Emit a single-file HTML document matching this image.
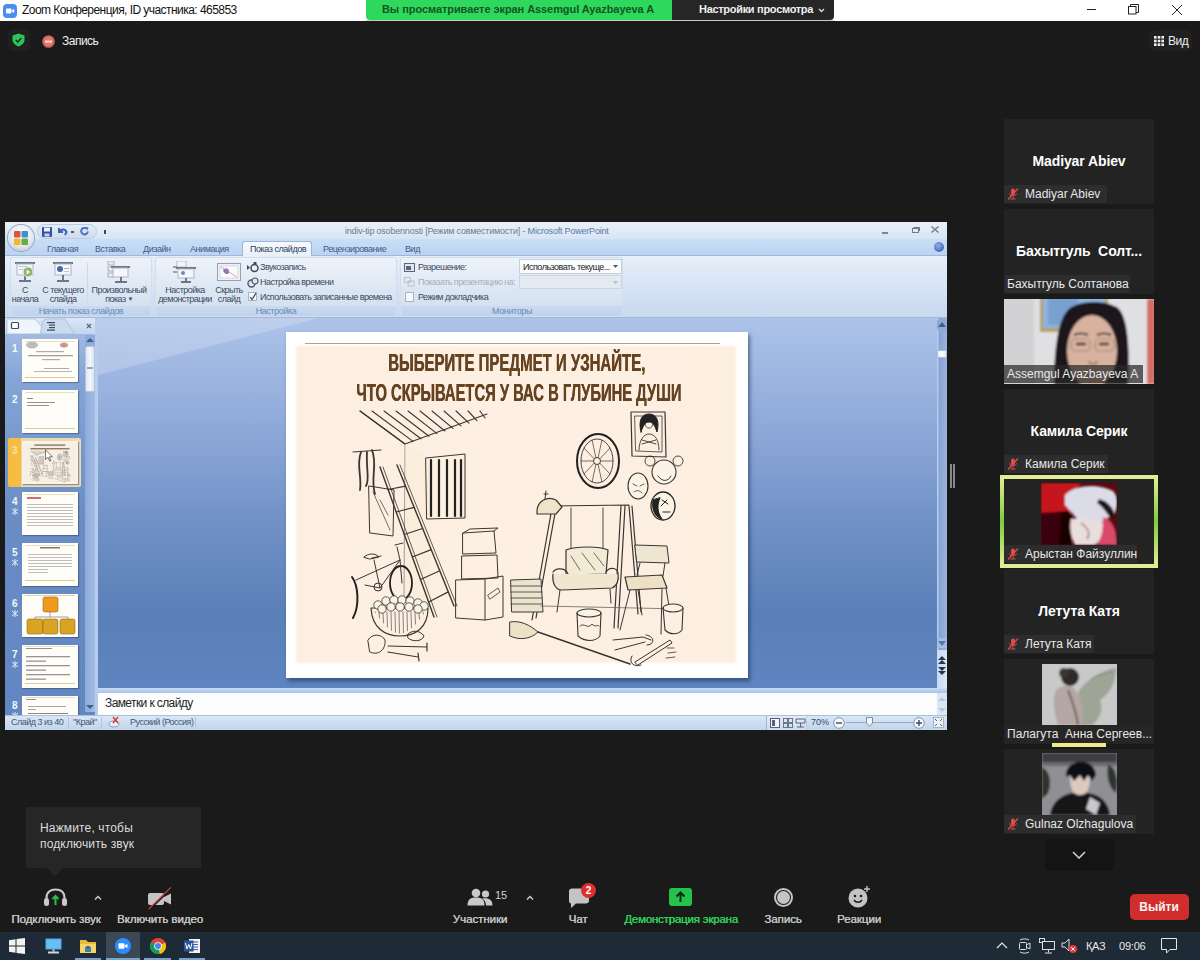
<!DOCTYPE html>
<html><head><meta charset="utf-8">
<style>
*{margin:0;padding:0;box-sizing:border-box}
html,body{width:1200px;height:960px;overflow:hidden;background:#1a1a1a;font-family:"Liberation Sans",sans-serif}
.a{position:absolute}
.t{position:absolute;white-space:nowrap}
/* title bar */
#title{left:0;top:0;width:1200px;height:21px;background:#fff}
/* ppt */
#ppt{left:5px;top:222px;width:942px;height:508px;background:#c5d7ee;overflow:hidden}
/* tiles */
.tile{position:absolute;left:1004px;width:150px;height:85px;background:#232323;overflow:hidden}
.tile .big{position:absolute;left:0;width:150px;top:34px;text-align:center;color:#fff;font-weight:bold;font-size:14px;letter-spacing:-0.1px}
.tile .lab{position:absolute;left:0;top:66px;height:18px;background:#2d2d2d;color:#e8e8e8;font-size:12px;line-height:18px;padding:0 4px 0 4px;white-space:nowrap}
#taskbar{left:0;top:932px;width:1200px;height:28px;background:#1e2b37}
</style></head><body>
<div id="title" class="a">
  <svg class="a" style="left:3px;top:4px" width="14" height="14" viewBox="0 0 14 14"><rect x="0" y="0" width="14" height="14" rx="4" fill="#4a8cf0"/><rect x="3" y="4.5" width="5.5" height="5" rx="1" fill="#fff"/><path d="M9 6.2 L11.2 5 V9 L9 7.8Z" fill="#fff"/></svg>
  <div class="t" style="left:22px;top:3px;font-size:12px;color:#111;letter-spacing:-0.55px">Zoom Конференция, ID участника: 465853</div>
  <div class="a" style="left:1087px;top:9px;width:9px;height:1px;background:#222"></div>
  <svg class="a" style="left:1128px;top:4px" width="11" height="11" viewBox="0 0 11 11"><rect x="0.5" y="2.5" width="7.5" height="7.5" fill="none" stroke="#222" stroke-width="1"/><path d="M2.5 2.5 V0.5 H10.5 V8.5 H8" fill="none" stroke="#222" stroke-width="1"/></svg>
  <svg class="a" style="left:1172px;top:5px" width="10" height="10" viewBox="0 0 10 10"><path d="M0 0 L10 10 M10 0 L0 10" stroke="#222" stroke-width="1"/></svg>
</div>
<div class="a" style="left:366px;top:0;width:306px;height:20px;background:#2ed85c;border-radius:0 0 0 4px"></div><div class="a" style="left:366px;top:20px;width:468px;height:1px;background:#c9c9c9"></div>
<div class="t" style="left:382px;top:3px;font-size:11px;color:#145425;font-weight:bold;letter-spacing:-0.07px">Вы просматриваете экран Assemgul Ayazbayeva A</div>
<div class="a" style="left:672px;top:0;width:162px;height:20px;background:#262626;border-radius:0 0 4px 0"></div>
<div class="t" style="left:699px;top:3px;font-size:11px;color:#f0f0f0;font-weight:bold;letter-spacing:-0.3px">Настройки просмотра</div>
<svg class="a" style="left:818px;top:8px" width="7" height="5" viewBox="0 0 7 5"><path d="M1 1 L3.5 3.5 L6 1" fill="none" stroke="#ddd" stroke-width="1.3"/></svg>
<!-- shield & record -->
<div class="a" style="left:8px;top:29px;width:22px;height:22px;background:#202020;border-radius:5px"></div>
<svg class="a" style="left:12px;top:33px" width="13" height="14" viewBox="0 0 13 14"><path d="M6.5 0.5 L12.5 2.5 V7 C12.5 10 9.5 12.5 6.5 13.5 C3.5 12.5 0.5 10 0.5 7 V2.5Z" fill="#2dc653"/><path d="M3.8 7 L5.8 9 L9.3 5.2" fill="none" stroke="#123" stroke-width="1.3"/></svg>
<svg class="a" style="left:42px;top:35px" width="13" height="13" viewBox="0 0 13 13"><circle cx="6.5" cy="6.5" r="6.3" fill="#d2605a"/><circle cx="6.5" cy="6.5" r="4.5" fill="#e27a72"/><rect x="3" y="5.6" width="7" height="2" fill="#f6dcd8"/></svg>
<div class="t" style="left:62px;top:34px;font-size:12px;color:#eee;letter-spacing:-0.5px">Запись</div>
<div class="a" style="left:1149px;top:30px;width:43px;height:21px;background:#202020;border-radius:5px"></div>
<svg class="a" style="left:1154px;top:36px" width="10" height="10" viewBox="0 0 10 10" fill="#eee"><rect x="0" y="0" width="2.6" height="2.6"/><rect x="3.7" y="0" width="2.6" height="2.6"/><rect x="7.4" y="0" width="2.6" height="2.6"/><rect x="0" y="3.7" width="2.6" height="2.6"/><rect x="3.7" y="3.7" width="2.6" height="2.6"/><rect x="7.4" y="3.7" width="2.6" height="2.6"/><rect x="0" y="7.4" width="2.6" height="2.6"/><rect x="3.7" y="7.4" width="2.6" height="2.6"/><rect x="7.4" y="7.4" width="2.6" height="2.6"/></svg>
<div class="t" style="left:1168px;top:34px;font-size:12px;color:#eee;letter-spacing:-0.5px">Вид</div>
<div id="ppt" class="a">
 <!-- title bar -->
 <div class="a" style="left:0;top:0;width:942px;height:18px;background:linear-gradient(#e9f0f9,#d7e4f4)"></div>
 <div class="a" style="left:0;top:17px;width:942px;height:17px;background:linear-gradient(#c9def7,#bcd4f2);border-bottom:1px solid #9fb8d8"></div>
 <div class="a" style="left:32px;top:2px;width:60px;height:15px;border-radius:8px;background:linear-gradient(#e3ecf7,#cfdcee);border:1px solid #bccde3"></div>
 <svg class="a" style="left:37px;top:5px" width="10" height="10" viewBox="0 0 10 10"><rect x="0" y="0" width="10" height="10" rx="1" fill="#3b4fa0"/><rect x="2" y="0.5" width="6" height="4" fill="#e8eefa"/><rect x="2.5" y="6.5" width="5" height="3" fill="#c6d0ea"/></svg>
 <svg class="a" style="left:53px;top:5px" width="10" height="9" viewBox="0 0 10 9"><path d="M1 1 V5 H5 M1.5 4.5 C3 2 7 1.5 8.5 5 L7 8" fill="none" stroke="#3f63b8" stroke-width="2"/></svg>
 <div class="a" style="left:66px;top:9px;width:3px;height:2px;background:#556"></div>
 <svg class="a" style="left:75px;top:5px" width="9" height="9" viewBox="0 0 9 9"><path d="M6.5 1.5 A3.3 3.3 0 1 0 7.8 4.5" fill="none" stroke="#4a72c0" stroke-width="2"/><path d="M5 0 L8.5 0.5 L7.5 3.5Z" fill="#4a72c0"/></svg>
 <div class="a" style="left:99px;top:8px;width:2px;height:4px;background:#445"></div>
 <div class="a" style="left:3px;top:3px;width:26px;height:26px;border-radius:50%;background:radial-gradient(circle at 50% 35%,#ffffff,#e1e6ee 60%,#a9b3c3);box-shadow:0 0 0 1px #9aa6b8"></div>
 <svg class="a" style="left:8px;top:8px" width="16" height="16" viewBox="0 0 16 16"><rect x="1" y="1" width="6.5" height="6.5" rx="1" fill="#d4583a"/><rect x="8.5" y="1" width="6.5" height="6.5" rx="1" fill="#3f8fd2"/><rect x="1" y="8.5" width="6.5" height="6.5" rx="1" fill="#f2b632"/><rect x="8.5" y="8.5" width="6.5" height="6.5" rx="1" fill="#5fb040"/></svg>
 <div class="t" style="left:340px;top:4px;font-size:9px;color:#6f7a8a;letter-spacing:-0.2px">indiv-tip osobennosti [Режим совместимости] - <span style="color:#5a78a6">Microsoft PowerPoint</span></div>
 <div class="a" style="left:877px;top:10px;width:6px;height:2px;background:#7a8799"></div>
 <svg class="a" style="left:907px;top:5px" width="8" height="6" viewBox="0 0 8 6"><rect x="0.5" y="1.5" width="6" height="4" fill="none" stroke="#6d7a8c"/><path d="M1.5 0.5 H7.5 V4" fill="none" stroke="#6d7a8c"/></svg>
 <svg class="a" style="left:926px;top:4px" width="8" height="7" viewBox="0 0 8 7"><path d="M0.5 0.5 L7.5 6.5 M7.5 0.5 L0.5 6.5" stroke="#6d7a8c" stroke-width="1.3"/></svg>
 <!-- tabs -->
 <div class="t" style="left:42px;top:22px;font-size:9px;color:#3d5a85;letter-spacing:-0.45px">Главная</div>
 <div class="t" style="left:90px;top:22px;font-size:9px;color:#3d5a85;letter-spacing:-0.45px">Вставка</div>
 <div class="t" style="left:138px;top:22px;font-size:9px;color:#3d5a85;letter-spacing:-0.45px">Дизайн</div>
 <div class="t" style="left:185px;top:22px;font-size:9px;color:#3d5a85;letter-spacing:-0.45px">Анимация</div>
 <div class="a" style="left:237px;top:19px;width:70px;height:17px;background:linear-gradient(#f7fafd,#e6eef8);border:1px solid #9db5d6;border-bottom:none;border-radius:3px 3px 0 0"></div>
 <div class="t" style="left:245px;top:22px;font-size:9px;color:#2c3e5c;letter-spacing:-0.45px">Показ слайдов</div>
 <div class="t" style="left:318px;top:22px;font-size:9px;color:#3d5a85;letter-spacing:-0.45px">Рецензирование</div>
 <div class="t" style="left:400px;top:22px;font-size:9px;color:#3d5a85;letter-spacing:-0.45px">Вид</div>
 <div class="a" style="left:929px;top:20px;width:10px;height:10px;border-radius:50%;background:radial-gradient(circle at 40% 35%,#8fb0ec,#2a4fa8)"></div>
 <!-- ribbon -->
 <div class="a" style="left:0;top:34px;width:942px;height:62px;background:linear-gradient(#e7eff9,#d9e6f5 40%,#c8d9ef);border-bottom:1px solid #9fb8d8"></div>
<div class="a" style="left:5px;top:35px;width:142px;height:60px;border-radius:3px;background:linear-gradient(#eef3fa,#dde7f3 55%,#cfdcee);box-shadow:inset 0 0 0 1px #d2deee"></div>
<div class="a" style="left:6px;top:84px;width:140px;height:10px;background:linear-gradient(#c9daf0,#c0d3ec);border-radius:0 0 3px 3px"></div>
<div class="a" style="left:150px;top:35px;width:242px;height:60px;border-radius:3px;background:linear-gradient(#eef3fa,#dde7f3 55%,#cfdcee);box-shadow:inset 0 0 0 1px #d2deee"></div>
<div class="a" style="left:151px;top:84px;width:240px;height:10px;background:linear-gradient(#c9daf0,#c0d3ec);border-radius:0 0 3px 3px"></div>
<div class="a" style="left:395px;top:35px;width:223px;height:60px;border-radius:3px;background:linear-gradient(#eef3fa,#dde7f3 55%,#cfdcee);box-shadow:inset 0 0 0 1px #d2deee"></div>
<div class="a" style="left:396px;top:84px;width:221px;height:10px;background:linear-gradient(#c9daf0,#c0d3ec);border-radius:0 0 3px 3px"></div>
<div class="t" style="left:16px;width:120px;text-align:center;top:84px;font-size:9px;color:#6c8ab6;letter-spacing:-0.4px;">Начать показ слайдов</div>
<div class="t" style="left:211px;width:120px;text-align:center;top:84px;font-size:9px;color:#6c8ab6;letter-spacing:-0.4px;">Настройка</div>
<div class="t" style="left:447px;width:120px;text-align:center;top:84px;font-size:9px;color:#6c8ab6;letter-spacing:-0.4px;">Мониторы</div>
<svg class="a" style="left:9px;top:40px" width="22" height="21" viewBox="0 0 22 21"><rect x="1" y="0" width="20" height="2" fill="#6d7684"/><rect x="3" y="2" width="16" height="11" fill="#f4f6f9" stroke="#aeb6c2" stroke-width="1"/><rect x="10" y="13" width="2" height="5" fill="#6d7684"/><rect x="5" y="18" width="12" height="2" fill="#6d7684"/><rect x="5" y="4" width="9" height="1" fill="#c0c6d0"/><rect x="5" y="7" width="7" height="1" fill="#c0c6d0"/><circle cx="14" cy="10" r="5" fill="#8cb566" stroke="#e9eef3" stroke-width="1"/><path d="M12.5 7.5 L16.5 10 L12.5 12.5Z" fill="#f2f7ea"/></svg>
<svg class="a" style="left:47px;top:40px" width="22" height="21" viewBox="0 0 22 21"><rect x="1" y="0" width="20" height="2" fill="#6d7684"/><rect x="3" y="2" width="16" height="11" fill="#f4f6f9" stroke="#aeb6c2" stroke-width="1"/><rect x="10" y="13" width="2" height="5" fill="#6d7684"/><rect x="5" y="18" width="12" height="2" fill="#6d7684"/><circle cx="8" cy="7" r="3" fill="#4a6aa6"/><rect x="12" y="6" width="5" height="1" fill="#c9a99a"/><rect x="12" y="9" width="5" height="1" fill="#c0c6d0"/></svg>
<div class="a" style="left:82px;top:41px;width:1px;height:40px;background:#cdd9ea"></div>
<svg class="a" style="left:102px;top:39px" width="24" height="22" viewBox="0 0 24 22"><rect x="1" y="0" width="6" height="4" fill="#e9edf2" stroke="#9aa3ae" stroke-width="0.8"/><rect x="1" y="6" width="6" height="4" fill="#e9edf2" stroke="#9aa3ae" stroke-width="0.8"/><rect x="1" y="12" width="6" height="4" fill="#e9edf2" stroke="#9aa3ae" stroke-width="0.8"/><rect x="4" y="5" width="19" height="2" fill="#6d7684"/><rect x="6" y="7" width="15" height="9" fill="#f4f6f9" stroke="#aeb6c2" stroke-width="1"/><rect x="13" y="16" width="2" height="4" fill="#6d7684"/><rect x="8" y="20" width="12" height="2" fill="#6d7684"/></svg>
<div class="t" style="left:-40px;width:120px;text-align:center;top:63px;font-size:9px;color:#3b4b62;letter-spacing:-0.55px;">С</div>
<div class="t" style="left:-40px;width:120px;text-align:center;top:72px;font-size:9px;color:#3b4b62;letter-spacing:-0.55px;">начала</div>
<div class="t" style="left:-2px;width:120px;text-align:center;top:63px;font-size:9px;color:#3b4b62;letter-spacing:-0.55px;">С текущего</div>
<div class="t" style="left:-2px;width:120px;text-align:center;top:72px;font-size:9px;color:#3b4b62;letter-spacing:-0.55px;">слайда</div>
<div class="t" style="left:54px;width:120px;text-align:center;top:63px;font-size:9px;color:#3b4b62;letter-spacing:-0.55px;">Произвольный</div>
<div class="t" style="left:54px;width:120px;text-align:center;top:72px;font-size:9px;color:#3b4b62;letter-spacing:-0.55px;">показ <span style="font-size:6px;vertical-align:1px">▼</span></div>
<svg class="a" style="left:168px;top:39px" width="24" height="22" viewBox="0 0 24 22"><rect x="4" y="0" width="9" height="6" fill="#f3f5f8" stroke="#a7afba" stroke-width="0.8"/><rect x="0" y="5" width="4" height="2" fill="#9aa3ae"/><rect x="0" y="10" width="4" height="2" fill="#9aa3ae"/><rect x="3" y="6" width="20" height="2" fill="#6d7684"/><rect x="5" y="8" width="16" height="9" fill="#f4f6f9" stroke="#aeb6c2" stroke-width="1"/><circle cx="10" cy="12" r="2" fill="#6a8ac0"/><rect x="12" y="17" width="2" height="3" fill="#6d7684"/><rect x="8" y="20" width="10" height="2" fill="#6d7684"/></svg>
<svg class="a" style="left:212px;top:41px" width="24" height="18" viewBox="0 0 24 18"><rect x="0.5" y="0.5" width="23" height="17" fill="#eef1f5" stroke="#98a1ad"/><rect x="3" y="3" width="18" height="12" fill="#f9fafc" stroke="#c1c7cf" stroke-width="0.6"/><path d="M6 7 C9 4 13 6 12 10 C10 12 7 11 6 7Z" fill="#8a6fb0"/><path d="M4 4 L20 14" stroke="#d28ca6" stroke-width="0.8"/></svg>
<div class="t" style="left:120px;width:120px;text-align:center;top:63px;font-size:9px;color:#3b4b62;letter-spacing:-0.55px;">Настройка</div>
<div class="t" style="left:120px;width:120px;text-align:center;top:72px;font-size:9px;color:#3b4b62;letter-spacing:-0.55px;">демонстрации</div>
<div class="t" style="left:164px;width:120px;text-align:center;top:63px;font-size:9px;color:#3b4b62;letter-spacing:-0.55px;">Скрыть</div>
<div class="t" style="left:164px;width:120px;text-align:center;top:72px;font-size:9px;color:#3b4b62;letter-spacing:-0.55px;">слайд</div>
<svg class="a" style="left:242px;top:40px" width="12" height="11" viewBox="0 0 12 11"><path d="M0 3 L3 5.5 L0 8Z" fill="#3b4b62"/><circle cx="7.5" cy="6" r="3.5" fill="none" stroke="#3b4b62" stroke-width="1.5"/><rect x="6.5" y="0" width="3" height="2" fill="#3b4b62"/></svg>
<div class="t" style="left:255px;top:40px;font-size:9px;color:#3b4b62;letter-spacing:-0.55px;">Звукозапись</div>
<svg class="a" style="left:242px;top:55px" width="12" height="11" viewBox="0 0 12 11"><circle cx="4.5" cy="6.5" r="3.5" fill="none" stroke="#4b5870" stroke-width="1.4"/><circle cx="8" cy="4" r="3" fill="#dfe6ef" stroke="#4b5870" stroke-width="1.2"/></svg>
<div class="t" style="left:255px;top:55px;font-size:9px;color:#3b4b62;letter-spacing:-0.55px;">Настройка времени</div>
<div class="a" style="left:243px;top:70px;width:9px;height:9px;background:#f6f8fb;border:1px solid #a9b4c2"></div>
<svg class="a" style="left:244px;top:70px" width="8" height="9" viewBox="0 0 8 9"><path d="M1 5 L3 7.5 L7 1" fill="none" stroke="#394860" stroke-width="1.2"/></svg>
<div class="t" style="left:255px;top:70px;font-size:9px;color:#3b4b62;letter-spacing:-0.55px;">Использовать записанные времена</div>
<svg class="a" style="left:399px;top:41px" width="11" height="9" viewBox="0 0 11 9"><rect x="0.5" y="0.5" width="10" height="8" fill="#e2e7ee" stroke="#58657a"/><rect x="2" y="3" width="5" height="4" fill="#58657a"/></svg>
<div class="t" style="left:413px;top:40px;font-size:9px;color:#3b4b62;letter-spacing:-0.55px;">Разрешение:</div>
<svg class="a" style="left:399px;top:55px" width="11" height="10" viewBox="0 0 11 10"><rect x="0.5" y="0.5" width="6" height="5" fill="none" stroke="#b8c2cf"/><rect x="4" y="4" width="6" height="5" fill="none" stroke="#b8c2cf"/></svg>
<div class="t" style="left:413px;top:55px;font-size:9px;color:#a4b0c0;letter-spacing:-0.55px;">Показать презентацию на:</div>
<div class="a" style="left:400px;top:70px;width:9px;height:10px;background:#f6f8fb;border:1px solid #a9b4c2"></div>
<div class="t" style="left:413px;top:70px;font-size:9px;color:#3b4b62;letter-spacing:-0.55px;">Режим докладчика</div>
<div class="a" style="left:514px;top:37px;width:103px;height:15px;background:#fbfcfd;border:1px solid #c3cfdf"></div>
<div class="t" style="left:518px;top:40px;font-size:9px;color:#222;letter-spacing:-0.5px;">Использовать текуще...</div>
<svg class="a" style="left:608px;top:43px" width="5" height="3" viewBox="0 0 5 3"><path d="M0 0 H5 L2.5 3Z" fill="#555"/></svg>
<div class="a" style="left:514px;top:53px;width:103px;height:14px;background:#e4eaf2;border:1px solid #ccd6e3"></div>
<svg class="a" style="left:608px;top:59px" width="5" height="3" viewBox="0 0 5 3"><path d="M0 0 H5 L2.5 3Z" fill="#b3bcc8"/></svg>
 <!-- left pane -->
 <div class="a" style="left:0;top:96px;width:90px;height:397px;background:linear-gradient(#aac2e8,#86a5d6 15%,#6a8dc6 50%,#6286c2)"></div>
<div class="a" style="left:0px;top:96px;width:90px;height:16px;background:linear-gradient(#d9e6f6,#c3d6ef)"></div>
<svg class="a" style="left:0px;top:96px" width="90" height="16" viewBox="0 0 90 16"><path d="M2 16 V3 Q2 1 4 1 H30 L37 9 L44 16Z" fill="#f0f5fb" stroke="#a9bedb" stroke-width="0.8"/><path d="M35 16 L38 3 Q39 1 41 1 H60 L70 16Z" fill="#cbdbef" stroke="#a9bedb" stroke-width="0.8"/><rect x="6.5" y="4.5" width="7" height="6" rx="1" fill="#fff" stroke="#394860" stroke-width="1.2"/><rect x="42" y="4" width="8" height="1.2" fill="#394860"/><rect x="44" y="6.5" width="6" height="1.2" fill="#394860"/><rect x="44" y="9" width="6" height="1.2" fill="#394860"/><rect x="42" y="11.5" width="8" height="1.2" fill="#394860"/><path d="M82 6 L86 10 M86 6 L82 10" stroke="#56667e" stroke-width="1.2"/></svg>
<div class="a" style="left:80px;top:113px;width:10px;height:377px;background:linear-gradient(90deg,#8eabd9,#a2bbe3)"></div>
<div class="a" style="left:80px;top:113px;width:10px;height:10px;background:#91acd8"></div>
<svg class="a" style="left:81px;top:116px" width="8" height="4" viewBox="0 0 8 4"><path d="M0 4 L4 0 L8 4Z" fill="#3e5d91"/></svg>
<div class="a" style="left:80px;top:124px;width:10px;height:46px;background:linear-gradient(90deg,#dde6f3,#f5f8fc,#d8e2f0);border:1px solid #b5c6de;border-radius:2px"></div>
<div class="a" style="left:82px;top:145px;width:6px;height:2px;border-top:1px solid #9aa8bb;border-bottom:1px solid #9aa8bb"></div>
<svg class="a" style="left:81px;top:483px" width="8" height="4" viewBox="0 0 8 4"><path d="M0 0 L4 4 L8 0Z" fill="#3e5d91"/></svg>
<div class="a" style="left:3px;top:216px;width:73px;height:49px;background:linear-gradient(90deg,#f6bd42 0,#f6bd42 13px,#e8d7b0 13px,#ead9b6);border-radius:2px"></div>
<div class="t" style="left:7px;top:121px;font-size:10px;font-weight:bold;color:#f4f7fc">1</div>
<div class="a" style="left:17px;top:117px;width:56px;height:43px;background:#fffdf7;box-shadow:1px 1px 1px rgba(40,60,100,0.45);overflow:hidden"></div>
<div class="t" style="left:7px;top:172px;font-size:10px;font-weight:bold;color:#f4f7fc">2</div>
<div class="a" style="left:17px;top:168px;width:56px;height:43px;background:#fffdf7;box-shadow:1px 1px 1px rgba(40,60,100,0.45);overflow:hidden"></div>
<div class="t" style="left:7px;top:223px;font-size:10px;font-weight:bold;color:#fbe3a8">3</div>
<div class="a" style="left:17px;top:219px;width:56px;height:43px;background:#fbf3e6;box-shadow:1px 1px 1px rgba(40,60,100,0.45);overflow:hidden"></div>
<div class="t" style="left:7px;top:274px;font-size:10px;font-weight:bold;color:#f4f7fc">4</div>
<svg class="a" style="left:6px;top:286px" width="8" height="7" viewBox="0 0 8 7"><path d="M1 1 L7 6 M7 1 L1 6 M4 0 V7" stroke="#e6eefa" stroke-width="1"/></svg>
<div class="a" style="left:17px;top:270px;width:56px;height:43px;background:#fffdf7;box-shadow:1px 1px 1px rgba(40,60,100,0.45);overflow:hidden"></div>
<div class="t" style="left:7px;top:325px;font-size:10px;font-weight:bold;color:#f4f7fc">5</div>
<svg class="a" style="left:6px;top:337px" width="8" height="7" viewBox="0 0 8 7"><path d="M1 1 L7 6 M7 1 L1 6 M4 0 V7" stroke="#e6eefa" stroke-width="1"/></svg>
<div class="a" style="left:17px;top:321px;width:56px;height:43px;background:#fffdf7;box-shadow:1px 1px 1px rgba(40,60,100,0.45);overflow:hidden"></div>
<div class="t" style="left:7px;top:376px;font-size:10px;font-weight:bold;color:#f4f7fc">6</div>
<svg class="a" style="left:6px;top:388px" width="8" height="7" viewBox="0 0 8 7"><path d="M1 1 L7 6 M7 1 L1 6 M4 0 V7" stroke="#e6eefa" stroke-width="1"/></svg>
<div class="a" style="left:17px;top:372px;width:56px;height:43px;background:#fffdf7;box-shadow:1px 1px 1px rgba(40,60,100,0.45);overflow:hidden"></div>
<div class="t" style="left:7px;top:427px;font-size:10px;font-weight:bold;color:#f4f7fc">7</div>
<svg class="a" style="left:6px;top:439px" width="8" height="7" viewBox="0 0 8 7"><path d="M1 1 L7 6 M7 1 L1 6 M4 0 V7" stroke="#e6eefa" stroke-width="1"/></svg>
<div class="a" style="left:17px;top:423px;width:56px;height:43px;background:#fffdf7;box-shadow:1px 1px 1px rgba(40,60,100,0.45);overflow:hidden"></div>
<div class="t" style="left:7px;top:478px;font-size:10px;font-weight:bold;color:#f4f7fc">8</div>
<svg class="a" style="left:6px;top:490px" width="8" height="7" viewBox="0 0 8 7"><path d="M1 1 L7 6 M7 1 L1 6 M4 0 V7" stroke="#e6eefa" stroke-width="1"/></svg>
<div class="a" style="left:17px;top:474px;width:56px;height:19px;background:#fffdf7;box-shadow:1px 1px 1px rgba(40,60,100,0.45);overflow:hidden"></div>
<svg class="a" style="left:17px;top:117px;opacity:0.7" width="56" height="43" viewBox="0 0 56 43"><ellipse cx="10" cy="6" rx="6" ry="3.5" fill="#9aa2a8"/><ellipse cx="42" cy="6" rx="4" ry="2.5" fill="#b26a6a"/><rect x="3" y="2" width="50" height="0.8" fill="#d8c690"/><rect x="14" y="12" width="28" height="1.2" fill="#8a8a8a"/><rect x="6" y="16" width="45" height="1.3" fill="#7a7a7a"/><rect x="20" y="20" width="18" height="1.2" fill="#8a8a8a"/><rect x="22" y="29" width="25" height="1" fill="#888"/><rect x="12" y="32" width="38" height="1" fill="#999"/><rect x="3" y="38" width="50" height="1" fill="#c9b57a"/></svg>
<svg class="a" style="left:17px;top:168px;opacity:0.7" width="56" height="43" viewBox="0 0 56 43"><rect x="3" y="2" width="50" height="0.8" fill="#d8c690"/><rect x="5" y="8" width="6" height="1" fill="#555"/><rect x="5" y="12" width="28" height="1" fill="#666"/><rect x="5" y="15" width="22" height="1" fill="#666"/><rect x="3" y="38" width="50" height="1" fill="#c9b57a"/></svg>
<svg class="a" style="left:17px;top:219px" width="56" height="43" viewBox="286 332 462 346"><rect x="295" y="345" width="442" height="319" fill="#f8efe4"/><g stroke-width="2.6" opacity="0.55"><path d="M360 411 L405 444.0" fill="none" stroke="#3a3632" data-sw="1.1" stroke-linecap="round" stroke-linejoin="round"/><path d="M372 411 L413 441.4" fill="none" stroke="#3a3632" data-sw="1.1" stroke-linecap="round" stroke-linejoin="round"/><path d="M384 411 L421 438.8" fill="none" stroke="#3a3632" data-sw="1.1" stroke-linecap="round" stroke-linejoin="round"/><path d="M396 411 L429 436.2" fill="none" stroke="#3a3632" data-sw="1.1" stroke-linecap="round" stroke-linejoin="round"/><path d="M408 411 L437 433.6" fill="none" stroke="#3a3632" data-sw="1.1" stroke-linecap="round" stroke-linejoin="round"/><path d="M420 411 L445 431.0" fill="none" stroke="#3a3632" data-sw="1.1" stroke-linecap="round" stroke-linejoin="round"/><path d="M432 411 L453 428.4" fill="none" stroke="#3a3632" data-sw="1.1" stroke-linecap="round" stroke-linejoin="round"/><path d="M444 411 L461 425.8" fill="none" stroke="#3a3632" data-sw="1.1" stroke-linecap="round" stroke-linejoin="round"/><path d="M456 411 L469 423.2" fill="none" stroke="#3a3632" data-sw="1.1" stroke-linecap="round" stroke-linejoin="round"/><path d="M468 411 L477 420.6" fill="none" stroke="#3a3632" data-sw="1.1" stroke-linecap="round" stroke-linejoin="round"/><path d="M480 411 L485 418.0" fill="none" stroke="#3a3632" data-sw="1.1" stroke-linecap="round" stroke-linejoin="round"/><path d="M360 411 L405 444" fill="none" stroke="#3a3632" data-sw="1.1" stroke-linecap="round" stroke-linejoin="round"/><path d="M405 444 L487 414" fill="none" stroke="#3a3632" data-sw="1.1" stroke-linecap="round" stroke-linejoin="round"/><path d="M405 444 L404 600" fill="none" stroke="#8a857d" data-sw="0.8" stroke-linecap="round" stroke-linejoin="round"/><path d="M405 444 L405 600 L430 610 L430 455Z" fill="#f6ead0" opacity="0.35"/><path d="M353 452 L381 450" fill="none" stroke="#3a3632" data-sw="1.1" stroke-linecap="round" stroke-linejoin="round"/><path d="M361 452 C356 465 362 475 360 490 M372 450 C378 465 370 478 375 494 M367 452 C366 470 370 480 366 486" fill="none" stroke="#3a3632" data-sw="1.8" stroke-linecap="round" stroke-linejoin="round"/><path d="M426 458 L465 454 L465 518 L427 519Z" fill="none" stroke="#3a3632" data-sw="1.0" stroke-linecap="round" stroke-linejoin="round"/><path d="M431 460 L431 516" fill="none" stroke="#222" data-sw="2.2" stroke-linecap="round" stroke-linejoin="round"/><path d="M439 460 L439 516" fill="none" stroke="#222" data-sw="2.2" stroke-linecap="round" stroke-linejoin="round"/><path d="M447 460 L447 516" fill="none" stroke="#222" data-sw="2.2" stroke-linecap="round" stroke-linejoin="round"/><path d="M455 460 L455 516" fill="none" stroke="#222" data-sw="2.2" stroke-linecap="round" stroke-linejoin="round"/><path d="M461 460 L461 516" fill="none" stroke="#222" data-sw="2.2" stroke-linecap="round" stroke-linejoin="round"/><path d="M369 486 L394 490 L393 536 L370 533Z" fill="none" stroke="#3a3632" data-sw="1.0" stroke-linecap="round" stroke-linejoin="round"/><path d="M373 492 L390 530 M380 500 L388 515" fill="none" stroke="#3a3632" data-sw="0.7" stroke-linecap="round" stroke-linejoin="round"/><path d="M380 467 L434 617" fill="none" stroke="#3a3632" data-sw="1.4" stroke-linecap="round" stroke-linejoin="round"/><path d="M383 467 L437 617" fill="none" stroke="#3a3632" data-sw="0.8" stroke-linecap="round" stroke-linejoin="round"/><path d="M397 465 L454 606" fill="none" stroke="#3a3632" data-sw="1.4" stroke-linecap="round" stroke-linejoin="round"/><path d="M400 465 L457 606" fill="none" stroke="#3a3632" data-sw="0.8" stroke-linecap="round" stroke-linejoin="round"/><path d="M388.1 489.5 L405.6 486.1" fill="none" stroke="#3a3632" data-sw="1.2" stroke-linecap="round" stroke-linejoin="round"/><path d="M396.2 512.0 L414.1 507.3" fill="none" stroke="#3a3632" data-sw="1.2" stroke-linecap="round" stroke-linejoin="round"/><path d="M404.3 534.5 L422.6 528.5" fill="none" stroke="#3a3632" data-sw="1.2" stroke-linecap="round" stroke-linejoin="round"/><path d="M412.4 557.0 L431.2 549.6" fill="none" stroke="#3a3632" data-sw="1.2" stroke-linecap="round" stroke-linejoin="round"/><path d="M420.5 579.5 L439.8 570.8" fill="none" stroke="#3a3632" data-sw="1.2" stroke-linecap="round" stroke-linejoin="round"/><path d="M428.6 602.0 L448.3 591.9" fill="none" stroke="#3a3632" data-sw="1.2" stroke-linecap="round" stroke-linejoin="round"/><path d="M463 533 L494 531 L496 553 L463 554Z M463 533 L470 529 L498 528 L494 531" fill="none" stroke="#3a3632" data-sw="1.0" stroke-linecap="round" stroke-linejoin="round"/><path d="M462 556 L497 555 L498 578 L462 579Z" fill="none" stroke="#3a3632" data-sw="1.0" stroke-linecap="round" stroke-linejoin="round"/><path d="M456 580 L485 579 L503 576 L503 617 L485 620 L456 618Z M485 579 L485 620" fill="none" stroke="#3a3632" data-sw="1.0" stroke-linecap="round" stroke-linejoin="round"/><path d="M488 595 L498 588 L500 592 L490 599Z" fill="none" stroke="#3a3632" data-sw="0.8" stroke-linecap="round" stroke-linejoin="round"/><path d="M352 577 C358 585 360 605 353 618" fill="none" stroke="#222" data-sw="2.0" stroke-linecap="round" stroke-linejoin="round"/><ellipse cx="401" cy="583" rx="11" ry="17" fill="none" stroke="#222" data-sw="1.8"/><path d="M356 580 L400 560 L402 583 M365 585 L380 588 L400 560 M380 588 L374 560 M372 558 L381 556 M395 545 L403 543 M400 560 L397 547" fill="none" stroke="#3a3632" data-sw="1.0" stroke-linecap="round" stroke-linejoin="round"/><path d="M364 557 C368 553 376 553 379 557 L370 559Z" fill="none" stroke="#3a3632" data-sw="1.0" stroke-linecap="round" stroke-linejoin="round"/><circle cx="378" cy="587" r="4" fill="none" stroke="#333" data-sw="1"/><path d="M371 608 C372 628 385 636 400 636 C415 636 428 628 428 608 Z" fill="none" stroke="#3a3632" data-sw="1.2" stroke-linecap="round" stroke-linejoin="round"/><path d="M375 612 L375.5 612.7" fill="none" stroke="#3a3632" data-sw="0.6" stroke-linecap="round" stroke-linejoin="round"/><path d="M379 612 L379.5 618.1" fill="none" stroke="#3a3632" data-sw="0.6" stroke-linecap="round" stroke-linejoin="round"/><path d="M383 612 L383.5 623.0" fill="none" stroke="#3a3632" data-sw="0.6" stroke-linecap="round" stroke-linejoin="round"/><path d="M387 612 L387.5 627.1" fill="none" stroke="#3a3632" data-sw="0.6" stroke-linecap="round" stroke-linejoin="round"/><path d="M391 612 L391.5 630.2" fill="none" stroke="#3a3632" data-sw="0.6" stroke-linecap="round" stroke-linejoin="round"/><path d="M395 612 L395.5 632.2" fill="none" stroke="#3a3632" data-sw="0.6" stroke-linecap="round" stroke-linejoin="round"/><path d="M399 612 L399.5 633.0" fill="none" stroke="#3a3632" data-sw="0.6" stroke-linecap="round" stroke-linejoin="round"/><path d="M403 612 L403.5 632.5" fill="none" stroke="#3a3632" data-sw="0.6" stroke-linecap="round" stroke-linejoin="round"/><path d="M407 612 L407.5 630.8" fill="none" stroke="#3a3632" data-sw="0.6" stroke-linecap="round" stroke-linejoin="round"/><path d="M411 612 L411.5 627.9" fill="none" stroke="#3a3632" data-sw="0.6" stroke-linecap="round" stroke-linejoin="round"/><path d="M415 612 L415.5 624.1" fill="none" stroke="#3a3632" data-sw="0.6" stroke-linecap="round" stroke-linejoin="round"/><path d="M419 612 L419.5 619.4" fill="none" stroke="#3a3632" data-sw="0.6" stroke-linecap="round" stroke-linejoin="round"/><path d="M423 612 L423.5 614.1" fill="none" stroke="#3a3632" data-sw="0.6" stroke-linecap="round" stroke-linejoin="round"/><circle cx="378" cy="605" r="4.2" fill="#fbf4e6" stroke="#3a3632" data-sw="0.8"/><circle cx="386" cy="601" r="4.2" fill="#fbf4e6" stroke="#3a3632" data-sw="0.8"/><circle cx="394" cy="600" r="4.2" fill="#fbf4e6" stroke="#3a3632" data-sw="0.8"/><circle cx="402" cy="600" r="4.2" fill="#fbf4e6" stroke="#3a3632" data-sw="0.8"/><circle cx="410" cy="601" r="4.2" fill="#fbf4e6" stroke="#3a3632" data-sw="0.8"/><circle cx="418" cy="603" r="4.2" fill="#fbf4e6" stroke="#3a3632" data-sw="0.8"/><circle cx="424" cy="606" r="4.2" fill="#fbf4e6" stroke="#3a3632" data-sw="0.8"/><circle cx="382" cy="609" r="4.2" fill="#fbf4e6" stroke="#3a3632" data-sw="0.8"/><circle cx="391" cy="607" r="4.2" fill="#fbf4e6" stroke="#3a3632" data-sw="0.8"/><circle cx="400" cy="607" r="4.2" fill="#fbf4e6" stroke="#3a3632" data-sw="0.8"/><circle cx="409" cy="607" r="4.2" fill="#fbf4e6" stroke="#3a3632" data-sw="0.8"/><circle cx="418" cy="609" r="4.2" fill="#fbf4e6" stroke="#3a3632" data-sw="0.8"/><path d="M368 640 C372 633 382 634 385 640 C386 650 378 656 370 652Z" fill="none" stroke="#3a3632" data-sw="1.0" stroke-linecap="round" stroke-linejoin="round"/><path d="M388 646 L427 647 M388 652 L418 657 M427 643 L427 651 M418 653 L419 661" fill="none" stroke="#3a3632" data-sw="1.2" stroke-linecap="round" stroke-linejoin="round"/><path d="M408 634 C412 630 420 630 424 636 C422 642 412 642 408 638Z" fill="none" stroke="#3a3632" data-sw="1.0" stroke-linecap="round" stroke-linejoin="round"/><path d="M551 506 L629 505 M552 508 L532 620 M556 508 L536 618 M621 506 L614 628 M625 506 L618 628 M629 506 L638 614 M632 506 L641 612" fill="none" stroke="#3a3632" data-sw="1.2" stroke-linecap="round" stroke-linejoin="round"/><path d="M571 508 L571 552 M603 508 L603 550" fill="none" stroke="#3a3632" data-sw="0.9" stroke-linecap="round" stroke-linejoin="round"/><path d="M537 512 C537 500 548 496 556 500 L562 507 L556 514 L537 514Z" fill="#efe4c9" stroke="#3a3632" data-sw="1.2" stroke-linecap="round" stroke-linejoin="round"/><path d="M545 499 L546 491 M544 494 L548 494" fill="none" stroke="#3a3632" data-sw="1.0" stroke-linecap="round" stroke-linejoin="round"/><path d="M566 550 C575 546 600 546 608 550 L606 574 L566 575Z" fill="#f3ead6" stroke="#3a3632" data-sw="1.2" stroke-linecap="round" stroke-linejoin="round"/><path d="M571 556 L580 570 M582 553 L595 570 M594 553 L604 566" fill="none" stroke="#3a3632" data-sw="0.7" stroke-linecap="round" stroke-linejoin="round"/><path d="M553 572 C556 567 566 568 568 574 M606 572 C610 566 618 568 618 574" fill="none" stroke="#3a3632" data-sw="1.2" stroke-linecap="round" stroke-linejoin="round"/><path d="M553 574 C552 584 556 590 562 590 L612 588 C617 586 619 580 618 574" fill="#f1e6cf" stroke="#3a3632" data-sw="1.2" stroke-linecap="round" stroke-linejoin="round"/><path d="M560 590 L557 612 M610 589 L611 603" fill="none" stroke="#3a3632" data-sw="1.0" stroke-linecap="round" stroke-linejoin="round"/><path d="M511 580 L541 579 L543 612 L512 612Z" fill="#ece3cf" stroke="#3a3632" data-sw="1.0" stroke-linecap="round" stroke-linejoin="round"/><path d="M511 586 L542 586" fill="none" stroke="#3a3632" data-sw="0.8" stroke-linecap="round" stroke-linejoin="round"/><path d="M511 592 L542 592" fill="none" stroke="#3a3632" data-sw="0.8" stroke-linecap="round" stroke-linejoin="round"/><path d="M511 598 L542 598" fill="none" stroke="#3a3632" data-sw="0.8" stroke-linecap="round" stroke-linejoin="round"/><path d="M511 604 L542 604" fill="none" stroke="#3a3632" data-sw="0.8" stroke-linecap="round" stroke-linejoin="round"/><path d="M510 622 C520 620 530 625 538 632 C530 640 518 640 510 636Z" fill="#ece1c6" stroke="#3a3632" data-sw="1.0" stroke-linecap="round" stroke-linejoin="round"/><path d="M538 632 L630 664" fill="none" stroke="#3a3632" data-sw="1.6" stroke-linecap="round" stroke-linejoin="round"/><path d="M541 606 L681 609" fill="none" stroke="#666" data-sw="0.8" stroke-linecap="round" stroke-linejoin="round"/><path d="M635 545 L667 546 L669 563 L637 562Z" fill="#efe6d2" stroke="#3a3632" data-sw="1.0" stroke-linecap="round" stroke-linejoin="round"/><path d="M640 563 L637 575 M665 563 L663 576" fill="none" stroke="#3a3632" data-sw="1.0" stroke-linecap="round" stroke-linejoin="round"/><path d="M625 577 L662 575 L667 588 L628 590Z" fill="#eee0c6" stroke="#3a3632" data-sw="1.2" stroke-linecap="round" stroke-linejoin="round"/><path d="M630 590 L620 630 M662 589 L661 634 M638 590 L642 615 M666 588 L670 612" fill="none" stroke="#3a3632" data-sw="1.0" stroke-linecap="round" stroke-linejoin="round"/><ellipse cx="589" cy="613" rx="12" ry="4" fill="#fbf4e6" stroke="#3a3632" data-sw="1.1"/><path d="M577 613 L578 636 C585 642 595 642 600 636 L601 613" fill="none" stroke="#3a3632" data-sw="1.1" stroke-linecap="round" stroke-linejoin="round"/><path d="M580 626 C584 622 588 630 592 624 C595 628 598 624 599 626" fill="none" stroke="#3a3632" data-sw="0.9" stroke-linecap="round" stroke-linejoin="round"/><ellipse cx="673" cy="608" rx="10" ry="4" fill="#fbf4e6" stroke="#3a3632" data-sw="1.1"/><path d="M663 608 L665 630 C670 635 678 635 682 630 L683 608" fill="none" stroke="#3a3632" data-sw="1.1" stroke-linecap="round" stroke-linejoin="round"/><path d="M613 640 L643 637 L651 640 M615 650 L645 642 M646 635 C655 636 655 645 647 645" fill="none" stroke="#3a3632" data-sw="1.0" stroke-linecap="round" stroke-linejoin="round"/><path d="M635 662 L670 640 L672 643 L638 665Z" fill="none" stroke="#3a3632" data-sw="1.0" stroke-linecap="round" stroke-linejoin="round"/><path d="M632 656 C628 662 634 668 641 665" fill="none" stroke="#3a3632" data-sw="1.0" stroke-linecap="round" stroke-linejoin="round"/><path d="M667 648 L674 648 M668 653 L676 652 M666 658 L675 657" fill="none" stroke="#3a3632" data-sw="0.8" stroke-linecap="round" stroke-linejoin="round"/><ellipse cx="598" cy="461" rx="21" ry="27" fill="none" stroke="#222" data-sw="2.0"/><ellipse cx="597" cy="461" rx="16" ry="22" fill="none" stroke="#3a3632" data-sw="0.9"/><circle cx="597" cy="461" r="3.5" fill="none" stroke="#3a3632" data-sw="0.9"/><path d="M600.5 461.0 L613.0 461.0" fill="none" stroke="#3a3632" data-sw="0.7" stroke-linecap="round" stroke-linejoin="round"/><path d="M599.8 463.1 L609.9 473.9" fill="none" stroke="#3a3632" data-sw="0.7" stroke-linecap="round" stroke-linejoin="round"/><path d="M598.1 464.3 L601.9 481.9" fill="none" stroke="#3a3632" data-sw="0.7" stroke-linecap="round" stroke-linejoin="round"/><path d="M595.9 464.3 L592.1 481.9" fill="none" stroke="#3a3632" data-sw="0.7" stroke-linecap="round" stroke-linejoin="round"/><path d="M594.2 463.1 L584.1 473.9" fill="none" stroke="#3a3632" data-sw="0.7" stroke-linecap="round" stroke-linejoin="round"/><path d="M593.5 461.0 L581.0 461.0" fill="none" stroke="#3a3632" data-sw="0.7" stroke-linecap="round" stroke-linejoin="round"/><path d="M594.2 458.9 L584.1 448.1" fill="none" stroke="#3a3632" data-sw="0.7" stroke-linecap="round" stroke-linejoin="round"/><path d="M595.9 457.7 L592.1 440.1" fill="none" stroke="#3a3632" data-sw="0.7" stroke-linecap="round" stroke-linejoin="round"/><path d="M598.1 457.7 L601.9 440.1" fill="none" stroke="#3a3632" data-sw="0.7" stroke-linecap="round" stroke-linejoin="round"/><path d="M599.8 458.9 L609.9 448.1" fill="none" stroke="#3a3632" data-sw="0.7" stroke-linecap="round" stroke-linejoin="round"/><path d="M631 412 L665 412 L666 457 L632 456Z" fill="none" stroke="#3a3632" data-sw="1.2" stroke-linecap="round" stroke-linejoin="round"/><path d="M635 416 L662 416 L662 452 L636 451Z" fill="none" stroke="#3a3632" data-sw="0.8" stroke-linecap="round" stroke-linejoin="round"/><path d="M641 432 C638 420 642 414 649 414 C656 414 660 420 657 432 C655 426 653 422 649 422 C645 422 643 426 641 432Z" fill="#222" stroke="#222" data-sw="1" stroke-linecap="round" stroke-linejoin="round"/><path d="M645 423 C645 430 653 430 653 423" fill="none" stroke="#3a3632" data-sw="0.8" stroke-linecap="round" stroke-linejoin="round"/><path d="M639 450 C639 440 644 434 649 434 C655 434 659 440 659 450 M642 444 L656 440 M642 440 L656 444" fill="none" stroke="#3a3632" data-sw="0.9" stroke-linecap="round" stroke-linejoin="round"/><circle cx="664" cy="472" r="12" fill="#fbf4e6" stroke="#3a3632" data-sw="1.1"/><circle cx="650" cy="461" r="5" fill="none" stroke="#3a3632" data-sw="0.9"/><circle cx="678" cy="461" r="5" fill="none" stroke="#3a3632" data-sw="0.9"/><path d="M658 476 C662 482 668 482 671 476" fill="none" stroke="#3a3632" data-sw="1.0" stroke-linecap="round" stroke-linejoin="round"/><ellipse cx="638" cy="486" rx="10" ry="13" fill="#fbf4e6" stroke="#3a3632" data-sw="1.1"/><path d="M633 484 L637 486 M640 486 L644 484 M634 492 C636 490 640 490 642 493" fill="none" stroke="#3a3632" data-sw="0.8" stroke-linecap="round" stroke-linejoin="round"/><ellipse cx="663" cy="506" rx="12" ry="14" fill="#fbf4e6" stroke="#222" data-sw="1.3"/><path d="M653 500 C651 510 656 518 662 519 C657 512 657 505 660 498Z" fill="#222" stroke="#222" data-sw="1" stroke-linecap="round" stroke-linejoin="round"/><path d="M662 500 L668 504 M667 500 L661 506 M663 512 L670 512" fill="none" stroke="#222" data-sw="1.0" stroke-linecap="round" stroke-linejoin="round"/></g><rect x="388" y="356" width="254" height="11" fill="#6e5238" opacity="0.8"/><rect x="356" y="386" width="322" height="11" fill="#6e5238" opacity="0.8"/><path d="M480 400 L480 480 L500 462 L514 494 L524 489 L511 458 L536 458Z" fill="#fff" stroke="#222" stroke-width="5"/></svg>
<svg class="a" style="left:17px;top:270px;opacity:0.7" width="56" height="43" viewBox="0 0 56 43"><rect x="3" y="2" width="50" height="0.8" fill="#d8c690"/><rect x="5" y="5" width="14" height="2" fill="#b33"/><g fill="#9a9a9a"><rect x="5" y="12" width="46" height="0.9"/><rect x="5" y="15" width="46" height="0.9"/><rect x="5" y="18" width="46" height="0.9"/><rect x="5" y="21" width="46" height="0.9"/><rect x="5" y="24" width="46" height="0.9"/><rect x="5" y="27" width="46" height="0.9"/><rect x="5" y="30" width="46" height="0.9"/><rect x="5" y="33" width="46" height="0.9"/></g></svg>
<svg class="a" style="left:17px;top:321px;opacity:0.7" width="56" height="43" viewBox="0 0 56 43"><rect x="3" y="2" width="50" height="0.8" fill="#d8c690"/><rect x="18" y="4" width="20" height="1.5" fill="#444"/><g fill="#999"><rect x="6" y="11" width="44" height="0.9"/><rect x="6" y="14" width="44" height="0.9"/><rect x="6" y="17" width="44" height="0.9"/><rect x="6" y="20" width="44" height="0.9"/><rect x="6" y="23" width="44" height="0.9"/><rect x="6" y="26" width="20" height="0.9"/><rect x="6" y="29" width="20" height="0.9"/></g><rect x="3" y="37" width="50" height="1" fill="#c9b57a"/></svg>
<svg class="a" style="left:17px;top:372px" width="56" height="43" viewBox="0 0 56 43"><rect x="3" y="1" width="50" height="0.8" fill="#d8c690"/><rect x="21" y="3" width="15" height="15" rx="2" fill="#f09a1c" stroke="#7a5a10" stroke-width="0.5"/><rect x="5" y="25" width="16" height="15" rx="2" fill="#d9a324" stroke="#7a5a10" stroke-width="0.5"/><rect x="21" y="25" width="15" height="15" rx="2" fill="#d9a324" stroke="#7a5a10" stroke-width="0.5"/><rect x="38" y="25" width="15" height="15" rx="2" fill="#d9a324" stroke="#7a5a10" stroke-width="0.5"/><path d="M28 18 V23 M13 23 H46 M13 23 V25 M46 23 V25" stroke="#777" stroke-width="0.7" fill="none"/></svg>
<svg class="a" style="left:17px;top:423px;opacity:0.7" width="56" height="43" viewBox="0 0 56 43"><rect x="3" y="1" width="50" height="0.8" fill="#d8c690"/><rect x="4" y="3" width="26" height="1" fill="#666"/><g fill="#6a6a6a"><rect x="4" y="11.0" width="44" height="1.3"/><rect x="4" y="15.5" width="20" height="1.3"/><rect x="4" y="20.0" width="44" height="1.3"/><rect x="4" y="24.5" width="20" height="1.3"/><rect x="4" y="29.0" width="44" height="1.3"/><rect x="4" y="33.5" width="20" height="1.3"/></g><rect x="3" y="38" width="50" height="1" fill="#c9b57a"/></svg>
<svg class="a" style="left:17px;top:474px;opacity:0.7" width="56" height="19" viewBox="0 0 56 19"><rect x="3" y="1" width="50" height="0.8" fill="#d8c690"/><rect x="4" y="3" width="10" height="1" fill="#666"/><rect x="6" y="10" width="38" height="0.9" fill="#777"/><rect x="6" y="13" width="8" height="0.9" fill="#777"/><rect x="6" y="17" width="40" height="1" fill="#555"/></svg>
 <!-- splitter -->
 <div class="a" style="left:90px;top:96px;width:3px;height:397px;background:#b6cdee"></div>
 <!-- main area -->
 <div class="a" style="left:93px;top:96px;width:839px;height:370px;overflow:hidden;background:linear-gradient(#adc3e9,#93addb 25%,#6b8dc3 60%,#5b7fb8 80%,#5f84bf)">
   <div class="a" style="left:0;top:-243px;width:600px;height:300px;background:linear-gradient(rgba(255,255,255,0.05),rgba(255,255,255,0.2));transform:rotate(-14.5deg);transform-origin:0 100%"></div>
 </div>
<div class="a" style="left:281px;top:110px;width:462px;height:346px;background:#fff;box-shadow:2px 3px 4px rgba(20,40,80,0.55)"></div>
<div class="a" style="left:290px;top:123px;width:442px;height:319px;background:linear-gradient(90deg,#fcefe1,#fdf0e3 50%,#fcefe0);box-shadow:0 0 3px 1px #fff inset"></div>
<div class="a" style="left:300px;top:121px;width:415px;height:1px;background:#b5a37a"></div>
<div class="t" style="left:308px;top:127px;"><div style="width:400px;text-align:center;transform:scaleX(0.625);transform-origin:50% 0;font-size:24px;font-weight:bold;color:#654220;letter-spacing:0px;text-shadow:0.6px 0 0 #654220">ВЫБЕРИТЕ ПРЕДМЕТ И УЗНАЙТЕ,</div></div>
<div class="t" style="left:255px;top:157px;"><div style="width:500px;text-align:center;transform:scaleX(0.615);transform-origin:50% 0;font-size:24px;font-weight:bold;color:#654220;letter-spacing:0px;text-shadow:0.6px 0 0 #654220">ЧТО СКРЫВАЕТСЯ У ВАС В ГЛУБИНЕ ДУШИ</div></div>
<svg class="a" style="left:281px;top:110px" width="462" height="346" viewBox="286 332 462 346"><path d="M360 411 L405 444.0" fill="none" stroke="#3a3632" stroke-width="1.1" stroke-linecap="round" stroke-linejoin="round"/><path d="M372 411 L413 441.4" fill="none" stroke="#3a3632" stroke-width="1.1" stroke-linecap="round" stroke-linejoin="round"/><path d="M384 411 L421 438.8" fill="none" stroke="#3a3632" stroke-width="1.1" stroke-linecap="round" stroke-linejoin="round"/><path d="M396 411 L429 436.2" fill="none" stroke="#3a3632" stroke-width="1.1" stroke-linecap="round" stroke-linejoin="round"/><path d="M408 411 L437 433.6" fill="none" stroke="#3a3632" stroke-width="1.1" stroke-linecap="round" stroke-linejoin="round"/><path d="M420 411 L445 431.0" fill="none" stroke="#3a3632" stroke-width="1.1" stroke-linecap="round" stroke-linejoin="round"/><path d="M432 411 L453 428.4" fill="none" stroke="#3a3632" stroke-width="1.1" stroke-linecap="round" stroke-linejoin="round"/><path d="M444 411 L461 425.8" fill="none" stroke="#3a3632" stroke-width="1.1" stroke-linecap="round" stroke-linejoin="round"/><path d="M456 411 L469 423.2" fill="none" stroke="#3a3632" stroke-width="1.1" stroke-linecap="round" stroke-linejoin="round"/><path d="M468 411 L477 420.6" fill="none" stroke="#3a3632" stroke-width="1.1" stroke-linecap="round" stroke-linejoin="round"/><path d="M480 411 L485 418.0" fill="none" stroke="#3a3632" stroke-width="1.1" stroke-linecap="round" stroke-linejoin="round"/><path d="M360 411 L405 444" fill="none" stroke="#3a3632" stroke-width="1.1" stroke-linecap="round" stroke-linejoin="round"/><path d="M405 444 L487 414" fill="none" stroke="#3a3632" stroke-width="1.1" stroke-linecap="round" stroke-linejoin="round"/><path d="M405 444 L404 600" fill="none" stroke="#8a857d" stroke-width="0.8" stroke-linecap="round" stroke-linejoin="round"/><path d="M405 444 L405 600 L430 610 L430 455Z" fill="#f6ead0" opacity="0.35"/><path d="M353 452 L381 450" fill="none" stroke="#3a3632" stroke-width="1.1" stroke-linecap="round" stroke-linejoin="round"/><path d="M361 452 C356 465 362 475 360 490 M372 450 C378 465 370 478 375 494 M367 452 C366 470 370 480 366 486" fill="none" stroke="#3a3632" stroke-width="1.8" stroke-linecap="round" stroke-linejoin="round"/><path d="M426 458 L465 454 L465 518 L427 519Z" fill="none" stroke="#3a3632" stroke-width="1.0" stroke-linecap="round" stroke-linejoin="round"/><path d="M431 460 L431 516" fill="none" stroke="#222" stroke-width="2.2" stroke-linecap="round" stroke-linejoin="round"/><path d="M439 460 L439 516" fill="none" stroke="#222" stroke-width="2.2" stroke-linecap="round" stroke-linejoin="round"/><path d="M447 460 L447 516" fill="none" stroke="#222" stroke-width="2.2" stroke-linecap="round" stroke-linejoin="round"/><path d="M455 460 L455 516" fill="none" stroke="#222" stroke-width="2.2" stroke-linecap="round" stroke-linejoin="round"/><path d="M461 460 L461 516" fill="none" stroke="#222" stroke-width="2.2" stroke-linecap="round" stroke-linejoin="round"/><path d="M369 486 L394 490 L393 536 L370 533Z" fill="none" stroke="#3a3632" stroke-width="1.0" stroke-linecap="round" stroke-linejoin="round"/><path d="M373 492 L390 530 M380 500 L388 515" fill="none" stroke="#3a3632" stroke-width="0.7" stroke-linecap="round" stroke-linejoin="round"/><path d="M380 467 L434 617" fill="none" stroke="#3a3632" stroke-width="1.4" stroke-linecap="round" stroke-linejoin="round"/><path d="M383 467 L437 617" fill="none" stroke="#3a3632" stroke-width="0.8" stroke-linecap="round" stroke-linejoin="round"/><path d="M397 465 L454 606" fill="none" stroke="#3a3632" stroke-width="1.4" stroke-linecap="round" stroke-linejoin="round"/><path d="M400 465 L457 606" fill="none" stroke="#3a3632" stroke-width="0.8" stroke-linecap="round" stroke-linejoin="round"/><path d="M388.1 489.5 L405.6 486.1" fill="none" stroke="#3a3632" stroke-width="1.2" stroke-linecap="round" stroke-linejoin="round"/><path d="M396.2 512.0 L414.1 507.3" fill="none" stroke="#3a3632" stroke-width="1.2" stroke-linecap="round" stroke-linejoin="round"/><path d="M404.3 534.5 L422.6 528.5" fill="none" stroke="#3a3632" stroke-width="1.2" stroke-linecap="round" stroke-linejoin="round"/><path d="M412.4 557.0 L431.2 549.6" fill="none" stroke="#3a3632" stroke-width="1.2" stroke-linecap="round" stroke-linejoin="round"/><path d="M420.5 579.5 L439.8 570.8" fill="none" stroke="#3a3632" stroke-width="1.2" stroke-linecap="round" stroke-linejoin="round"/><path d="M428.6 602.0 L448.3 591.9" fill="none" stroke="#3a3632" stroke-width="1.2" stroke-linecap="round" stroke-linejoin="round"/><path d="M463 533 L494 531 L496 553 L463 554Z M463 533 L470 529 L498 528 L494 531" fill="none" stroke="#3a3632" stroke-width="1.0" stroke-linecap="round" stroke-linejoin="round"/><path d="M462 556 L497 555 L498 578 L462 579Z" fill="none" stroke="#3a3632" stroke-width="1.0" stroke-linecap="round" stroke-linejoin="round"/><path d="M456 580 L485 579 L503 576 L503 617 L485 620 L456 618Z M485 579 L485 620" fill="none" stroke="#3a3632" stroke-width="1.0" stroke-linecap="round" stroke-linejoin="round"/><path d="M488 595 L498 588 L500 592 L490 599Z" fill="none" stroke="#3a3632" stroke-width="0.8" stroke-linecap="round" stroke-linejoin="round"/><path d="M352 577 C358 585 360 605 353 618" fill="none" stroke="#222" stroke-width="2.0" stroke-linecap="round" stroke-linejoin="round"/><ellipse cx="401" cy="583" rx="11" ry="17" fill="none" stroke="#222" stroke-width="1.8"/><path d="M356 580 L400 560 L402 583 M365 585 L380 588 L400 560 M380 588 L374 560 M372 558 L381 556 M395 545 L403 543 M400 560 L397 547" fill="none" stroke="#3a3632" stroke-width="1.0" stroke-linecap="round" stroke-linejoin="round"/><path d="M364 557 C368 553 376 553 379 557 L370 559Z" fill="none" stroke="#3a3632" stroke-width="1.0" stroke-linecap="round" stroke-linejoin="round"/><circle cx="378" cy="587" r="4" fill="none" stroke="#333" stroke-width="1"/><path d="M371 608 C372 628 385 636 400 636 C415 636 428 628 428 608 Z" fill="none" stroke="#3a3632" stroke-width="1.2" stroke-linecap="round" stroke-linejoin="round"/><path d="M375 612 L375.5 612.7" fill="none" stroke="#3a3632" stroke-width="0.6" stroke-linecap="round" stroke-linejoin="round"/><path d="M379 612 L379.5 618.1" fill="none" stroke="#3a3632" stroke-width="0.6" stroke-linecap="round" stroke-linejoin="round"/><path d="M383 612 L383.5 623.0" fill="none" stroke="#3a3632" stroke-width="0.6" stroke-linecap="round" stroke-linejoin="round"/><path d="M387 612 L387.5 627.1" fill="none" stroke="#3a3632" stroke-width="0.6" stroke-linecap="round" stroke-linejoin="round"/><path d="M391 612 L391.5 630.2" fill="none" stroke="#3a3632" stroke-width="0.6" stroke-linecap="round" stroke-linejoin="round"/><path d="M395 612 L395.5 632.2" fill="none" stroke="#3a3632" stroke-width="0.6" stroke-linecap="round" stroke-linejoin="round"/><path d="M399 612 L399.5 633.0" fill="none" stroke="#3a3632" stroke-width="0.6" stroke-linecap="round" stroke-linejoin="round"/><path d="M403 612 L403.5 632.5" fill="none" stroke="#3a3632" stroke-width="0.6" stroke-linecap="round" stroke-linejoin="round"/><path d="M407 612 L407.5 630.8" fill="none" stroke="#3a3632" stroke-width="0.6" stroke-linecap="round" stroke-linejoin="round"/><path d="M411 612 L411.5 627.9" fill="none" stroke="#3a3632" stroke-width="0.6" stroke-linecap="round" stroke-linejoin="round"/><path d="M415 612 L415.5 624.1" fill="none" stroke="#3a3632" stroke-width="0.6" stroke-linecap="round" stroke-linejoin="round"/><path d="M419 612 L419.5 619.4" fill="none" stroke="#3a3632" stroke-width="0.6" stroke-linecap="round" stroke-linejoin="round"/><path d="M423 612 L423.5 614.1" fill="none" stroke="#3a3632" stroke-width="0.6" stroke-linecap="round" stroke-linejoin="round"/><circle cx="378" cy="605" r="4.2" fill="#fbf4e6" stroke="#3a3632" stroke-width="0.8"/><circle cx="386" cy="601" r="4.2" fill="#fbf4e6" stroke="#3a3632" stroke-width="0.8"/><circle cx="394" cy="600" r="4.2" fill="#fbf4e6" stroke="#3a3632" stroke-width="0.8"/><circle cx="402" cy="600" r="4.2" fill="#fbf4e6" stroke="#3a3632" stroke-width="0.8"/><circle cx="410" cy="601" r="4.2" fill="#fbf4e6" stroke="#3a3632" stroke-width="0.8"/><circle cx="418" cy="603" r="4.2" fill="#fbf4e6" stroke="#3a3632" stroke-width="0.8"/><circle cx="424" cy="606" r="4.2" fill="#fbf4e6" stroke="#3a3632" stroke-width="0.8"/><circle cx="382" cy="609" r="4.2" fill="#fbf4e6" stroke="#3a3632" stroke-width="0.8"/><circle cx="391" cy="607" r="4.2" fill="#fbf4e6" stroke="#3a3632" stroke-width="0.8"/><circle cx="400" cy="607" r="4.2" fill="#fbf4e6" stroke="#3a3632" stroke-width="0.8"/><circle cx="409" cy="607" r="4.2" fill="#fbf4e6" stroke="#3a3632" stroke-width="0.8"/><circle cx="418" cy="609" r="4.2" fill="#fbf4e6" stroke="#3a3632" stroke-width="0.8"/><path d="M368 640 C372 633 382 634 385 640 C386 650 378 656 370 652Z" fill="none" stroke="#3a3632" stroke-width="1.0" stroke-linecap="round" stroke-linejoin="round"/><path d="M388 646 L427 647 M388 652 L418 657 M427 643 L427 651 M418 653 L419 661" fill="none" stroke="#3a3632" stroke-width="1.2" stroke-linecap="round" stroke-linejoin="round"/><path d="M408 634 C412 630 420 630 424 636 C422 642 412 642 408 638Z" fill="none" stroke="#3a3632" stroke-width="1.0" stroke-linecap="round" stroke-linejoin="round"/><path d="M551 506 L629 505 M552 508 L532 620 M556 508 L536 618 M621 506 L614 628 M625 506 L618 628 M629 506 L638 614 M632 506 L641 612" fill="none" stroke="#3a3632" stroke-width="1.2" stroke-linecap="round" stroke-linejoin="round"/><path d="M571 508 L571 552 M603 508 L603 550" fill="none" stroke="#3a3632" stroke-width="0.9" stroke-linecap="round" stroke-linejoin="round"/><path d="M537 512 C537 500 548 496 556 500 L562 507 L556 514 L537 514Z" fill="#efe4c9" stroke="#3a3632" stroke-width="1.2" stroke-linecap="round" stroke-linejoin="round"/><path d="M545 499 L546 491 M544 494 L548 494" fill="none" stroke="#3a3632" stroke-width="1.0" stroke-linecap="round" stroke-linejoin="round"/><path d="M566 550 C575 546 600 546 608 550 L606 574 L566 575Z" fill="#f3ead6" stroke="#3a3632" stroke-width="1.2" stroke-linecap="round" stroke-linejoin="round"/><path d="M571 556 L580 570 M582 553 L595 570 M594 553 L604 566" fill="none" stroke="#3a3632" stroke-width="0.7" stroke-linecap="round" stroke-linejoin="round"/><path d="M553 572 C556 567 566 568 568 574 M606 572 C610 566 618 568 618 574" fill="none" stroke="#3a3632" stroke-width="1.2" stroke-linecap="round" stroke-linejoin="round"/><path d="M553 574 C552 584 556 590 562 590 L612 588 C617 586 619 580 618 574" fill="#f1e6cf" stroke="#3a3632" stroke-width="1.2" stroke-linecap="round" stroke-linejoin="round"/><path d="M560 590 L557 612 M610 589 L611 603" fill="none" stroke="#3a3632" stroke-width="1.0" stroke-linecap="round" stroke-linejoin="round"/><path d="M511 580 L541 579 L543 612 L512 612Z" fill="#ece3cf" stroke="#3a3632" stroke-width="1.0" stroke-linecap="round" stroke-linejoin="round"/><path d="M511 586 L542 586" fill="none" stroke="#3a3632" stroke-width="0.8" stroke-linecap="round" stroke-linejoin="round"/><path d="M511 592 L542 592" fill="none" stroke="#3a3632" stroke-width="0.8" stroke-linecap="round" stroke-linejoin="round"/><path d="M511 598 L542 598" fill="none" stroke="#3a3632" stroke-width="0.8" stroke-linecap="round" stroke-linejoin="round"/><path d="M511 604 L542 604" fill="none" stroke="#3a3632" stroke-width="0.8" stroke-linecap="round" stroke-linejoin="round"/><path d="M510 622 C520 620 530 625 538 632 C530 640 518 640 510 636Z" fill="#ece1c6" stroke="#3a3632" stroke-width="1.0" stroke-linecap="round" stroke-linejoin="round"/><path d="M538 632 L630 664" fill="none" stroke="#3a3632" stroke-width="1.6" stroke-linecap="round" stroke-linejoin="round"/><path d="M541 606 L681 609" fill="none" stroke="#666" stroke-width="0.8" stroke-linecap="round" stroke-linejoin="round"/><path d="M635 545 L667 546 L669 563 L637 562Z" fill="#efe6d2" stroke="#3a3632" stroke-width="1.0" stroke-linecap="round" stroke-linejoin="round"/><path d="M640 563 L637 575 M665 563 L663 576" fill="none" stroke="#3a3632" stroke-width="1.0" stroke-linecap="round" stroke-linejoin="round"/><path d="M625 577 L662 575 L667 588 L628 590Z" fill="#eee0c6" stroke="#3a3632" stroke-width="1.2" stroke-linecap="round" stroke-linejoin="round"/><path d="M630 590 L620 630 M662 589 L661 634 M638 590 L642 615 M666 588 L670 612" fill="none" stroke="#3a3632" stroke-width="1.0" stroke-linecap="round" stroke-linejoin="round"/><ellipse cx="589" cy="613" rx="12" ry="4" fill="#fbf4e6" stroke="#3a3632" stroke-width="1.1"/><path d="M577 613 L578 636 C585 642 595 642 600 636 L601 613" fill="none" stroke="#3a3632" stroke-width="1.1" stroke-linecap="round" stroke-linejoin="round"/><path d="M580 626 C584 622 588 630 592 624 C595 628 598 624 599 626" fill="none" stroke="#3a3632" stroke-width="0.9" stroke-linecap="round" stroke-linejoin="round"/><ellipse cx="673" cy="608" rx="10" ry="4" fill="#fbf4e6" stroke="#3a3632" stroke-width="1.1"/><path d="M663 608 L665 630 C670 635 678 635 682 630 L683 608" fill="none" stroke="#3a3632" stroke-width="1.1" stroke-linecap="round" stroke-linejoin="round"/><path d="M613 640 L643 637 L651 640 M615 650 L645 642 M646 635 C655 636 655 645 647 645" fill="none" stroke="#3a3632" stroke-width="1.0" stroke-linecap="round" stroke-linejoin="round"/><path d="M635 662 L670 640 L672 643 L638 665Z" fill="none" stroke="#3a3632" stroke-width="1.0" stroke-linecap="round" stroke-linejoin="round"/><path d="M632 656 C628 662 634 668 641 665" fill="none" stroke="#3a3632" stroke-width="1.0" stroke-linecap="round" stroke-linejoin="round"/><path d="M667 648 L674 648 M668 653 L676 652 M666 658 L675 657" fill="none" stroke="#3a3632" stroke-width="0.8" stroke-linecap="round" stroke-linejoin="round"/><ellipse cx="598" cy="461" rx="21" ry="27" fill="none" stroke="#222" stroke-width="2.0"/><ellipse cx="597" cy="461" rx="16" ry="22" fill="none" stroke="#3a3632" stroke-width="0.9"/><circle cx="597" cy="461" r="3.5" fill="none" stroke="#3a3632" stroke-width="0.9"/><path d="M600.5 461.0 L613.0 461.0" fill="none" stroke="#3a3632" stroke-width="0.7" stroke-linecap="round" stroke-linejoin="round"/><path d="M599.8 463.1 L609.9 473.9" fill="none" stroke="#3a3632" stroke-width="0.7" stroke-linecap="round" stroke-linejoin="round"/><path d="M598.1 464.3 L601.9 481.9" fill="none" stroke="#3a3632" stroke-width="0.7" stroke-linecap="round" stroke-linejoin="round"/><path d="M595.9 464.3 L592.1 481.9" fill="none" stroke="#3a3632" stroke-width="0.7" stroke-linecap="round" stroke-linejoin="round"/><path d="M594.2 463.1 L584.1 473.9" fill="none" stroke="#3a3632" stroke-width="0.7" stroke-linecap="round" stroke-linejoin="round"/><path d="M593.5 461.0 L581.0 461.0" fill="none" stroke="#3a3632" stroke-width="0.7" stroke-linecap="round" stroke-linejoin="round"/><path d="M594.2 458.9 L584.1 448.1" fill="none" stroke="#3a3632" stroke-width="0.7" stroke-linecap="round" stroke-linejoin="round"/><path d="M595.9 457.7 L592.1 440.1" fill="none" stroke="#3a3632" stroke-width="0.7" stroke-linecap="round" stroke-linejoin="round"/><path d="M598.1 457.7 L601.9 440.1" fill="none" stroke="#3a3632" stroke-width="0.7" stroke-linecap="round" stroke-linejoin="round"/><path d="M599.8 458.9 L609.9 448.1" fill="none" stroke="#3a3632" stroke-width="0.7" stroke-linecap="round" stroke-linejoin="round"/><path d="M631 412 L665 412 L666 457 L632 456Z" fill="none" stroke="#3a3632" stroke-width="1.2" stroke-linecap="round" stroke-linejoin="round"/><path d="M635 416 L662 416 L662 452 L636 451Z" fill="none" stroke="#3a3632" stroke-width="0.8" stroke-linecap="round" stroke-linejoin="round"/><path d="M641 432 C638 420 642 414 649 414 C656 414 660 420 657 432 C655 426 653 422 649 422 C645 422 643 426 641 432Z" fill="#222" stroke="#222" stroke-width="1" stroke-linecap="round" stroke-linejoin="round"/><path d="M645 423 C645 430 653 430 653 423" fill="none" stroke="#3a3632" stroke-width="0.8" stroke-linecap="round" stroke-linejoin="round"/><path d="M639 450 C639 440 644 434 649 434 C655 434 659 440 659 450 M642 444 L656 440 M642 440 L656 444" fill="none" stroke="#3a3632" stroke-width="0.9" stroke-linecap="round" stroke-linejoin="round"/><circle cx="664" cy="472" r="12" fill="#fbf4e6" stroke="#3a3632" stroke-width="1.1"/><circle cx="650" cy="461" r="5" fill="none" stroke="#3a3632" stroke-width="0.9"/><circle cx="678" cy="461" r="5" fill="none" stroke="#3a3632" stroke-width="0.9"/><path d="M658 476 C662 482 668 482 671 476" fill="none" stroke="#3a3632" stroke-width="1.0" stroke-linecap="round" stroke-linejoin="round"/><ellipse cx="638" cy="486" rx="10" ry="13" fill="#fbf4e6" stroke="#3a3632" stroke-width="1.1"/><path d="M633 484 L637 486 M640 486 L644 484 M634 492 C636 490 640 490 642 493" fill="none" stroke="#3a3632" stroke-width="0.8" stroke-linecap="round" stroke-linejoin="round"/><ellipse cx="663" cy="506" rx="12" ry="14" fill="#fbf4e6" stroke="#222" stroke-width="1.3"/><path d="M653 500 C651 510 656 518 662 519 C657 512 657 505 660 498Z" fill="#222" stroke="#222" stroke-width="1" stroke-linecap="round" stroke-linejoin="round"/><path d="M662 500 L668 504 M667 500 L661 506 M663 512 L670 512" fill="none" stroke="#222" stroke-width="1.0" stroke-linecap="round" stroke-linejoin="round"/></svg>
 <div class="a" style="left:93px;top:466px;width:849px;height:5px;background:linear-gradient(#c9dcf6,#a8c2e8)"></div>
 <div class="a" style="left:93px;top:471px;width:839px;height:22px;background:#fdfdfd"></div>
 <div class="t" style="left:100px;top:474px;font-size:12px;color:#222;letter-spacing:-0.6px">Заметки к слайду</div>
 <div class="a" style="left:932px;top:471px;width:10px;height:22px;background:#dbe6f4"></div>
 <!-- status bar -->
 <div class="a" style="left:0;top:493px;width:942px;height:15px;background:linear-gradient(#d9e6f6,#c2d5ec);border-top:1px solid #a9c0de"></div>
<div class="a" style="left:932px;top:96px;width:10px;height:370px;background:linear-gradient(90deg,#b7cbec 0,#b7cbec 1px,#86a3d3 2px,#9ab3dd)"></div>
<div class="a" style="left:932px;top:98px;width:10px;height:10px;background:#8ea9d6"></div>
<svg class="a" style="left:933px;top:100px" width="8" height="5" viewBox="0 0 8 5"><path d="M0 5 L4 0 L8 5Z" fill="#3e5d91"/></svg>
<div class="a" style="left:932px;top:128px;width:10px;height:8px;background:linear-gradient(90deg,#e9eef6,#ffffff,#e4eaf4);border:1px solid #aabbd6"></div>
<div class="a" style="left:932px;top:416px;width:10px;height:10px;background:#a5bde4"></div>
<svg class="a" style="left:933px;top:419px" width="8" height="5" viewBox="0 0 8 5"><path d="M0 0 L4 5 L8 0Z" fill="#5a77a8"/></svg>
<div class="a" style="left:932px;top:428px;width:10px;height:38px;background:linear-gradient(90deg,#c8d9f0,#dbe7f6)"></div>
<svg class="a" style="left:933px;top:434px" width="8" height="9" viewBox="0 0 8 9"><path d="M0 4 L4 0 L8 4Z M0 8 L4 4 L8 8Z" fill="#28354a"/></svg>
<svg class="a" style="left:933px;top:445px" width="8" height="9" viewBox="0 0 8 9"><path d="M0 0 L4 4 L8 0Z M0 4 L4 8 L8 4Z" fill="#28354a"/></svg>
<div class="t" style="left:6px;top:495px;font-size:9px;color:#3f5677;letter-spacing:-0.5px;">Слайд 3 из 40</div>
<div class="a" style="left:63px;top:495px;width:1px;height:12px;background:#b3c6df"></div>
<div class="t" style="left:68px;top:495px;font-size:9px;color:#3f5677;letter-spacing:-0.5px;">"Край"</div>
<div class="a" style="left:96px;top:495px;width:1px;height:12px;background:#b3c6df"></div>
<svg class="a" style="left:103px;top:494px" width="13" height="12" viewBox="0 0 13 12"><ellipse cx="6" cy="8" rx="5" ry="3" fill="#e9eef5" stroke="#7d8ba0" stroke-width="0.8"/><path d="M5 1 L10 7 M10 1 L5 7" stroke="#d33" stroke-width="1.3"/></svg>
<div class="t" style="left:125px;top:495px;font-size:9px;color:#3f5677;letter-spacing:-0.5px;">Русский (Россия)</div>
<div class="a" style="left:190px;top:495px;width:1px;height:12px;background:#b3c6df"></div>
<div class="a" style="left:761px;top:494px;width:41px;height:14px;background:linear-gradient(#e3ecf7,#cddcef);border-left:1px solid #9fb4d2;border-right:1px solid #b9c9df"></div>
<svg class="a" style="left:765px;top:496px" width="36" height="10" viewBox="0 0 36 10"><rect x="0.5" y="0.5" width="9" height="9" fill="#f4f7fb" stroke="#55647a"/><rect x="2" y="2" width="3" height="6" fill="#55647a"/><g fill="none" stroke="#6b788c"><rect x="13.5" y="0.5" width="4" height="4"/><rect x="18.5" y="0.5" width="4" height="4"/><rect x="13.5" y="5.5" width="4" height="4"/><rect x="18.5" y="5.5" width="4" height="4"/></g><path d="M26 1 H35 V5 H26Z M30.5 5 V9 M27 9 H34" fill="#e4e8ee" stroke="#55647a"/></svg>
<div class="t" style="left:806px;top:495px;font-size:9px;color:#2f4a75;">70%</div>
<svg class="a" style="left:828px;top:495px" width="12" height="12" viewBox="0 0 12 12"><circle cx="6" cy="6" r="5.3" fill="#f6f8fb" stroke="#8593a8"/><rect x="3" y="5.3" width="6" height="1.4" fill="#3a4a62"/></svg>
<div class="a" style="left:841px;top:500px;width:68px;height:1px;background:#9aabc4"></div>
<svg class="a" style="left:861px;top:495px" width="7" height="10" viewBox="0 0 7 10"><path d="M0.5 0.5 H6.5 V6 L3.5 9.5 L0.5 6Z" fill="#f3f6fa" stroke="#7d8ca3"/></svg>
<svg class="a" style="left:908px;top:495px" width="12" height="12" viewBox="0 0 12 12"><circle cx="6" cy="6" r="5.3" fill="#f6f8fb" stroke="#8593a8"/><path d="M3 6 H9 M6 3 V9" stroke="#3a4a62" stroke-width="1.4"/></svg>
<svg class="a" style="left:928px;top:495px" width="11" height="11" viewBox="0 0 11 11"><rect x="0.5" y="0.5" width="10" height="10" fill="#eef2f7" stroke="#a6b3c5"/><path d="M2 2 L4 4 M9 2 L7 4 M2 9 L4 7 M9 9 L7 7" stroke="#55647a"/></svg>
<svg class="a" style="left:933px;top:475px" width="8" height="4" viewBox="0 0 8 4"><path d="M0 4 L4 0 L8 4Z" fill="#b8c6da"/></svg>
<svg class="a" style="left:933px;top:486px" width="8" height="4" viewBox="0 0 8 4"><path d="M0 0 L4 4 L8 0Z" fill="#b8c6da"/></svg>
</div>
<div class="tile" style="top:119px"><div class="big" style="">Madiyar Abiev</div><div class="lab" style="top:66px;width:103px;padding-left:21px;"><svg class="a" style="left:3px;top:3px" width="12" height="12" viewBox="0 0 12 12"><rect x="4" y="0.5" width="4" height="7" rx="2" fill="#e04a4a"/><path d="M2.5 5.5 C2.5 8.5 9.5 8.5 9.5 5.5 M6 8.5 V11 M3.5 11 H8.5" fill="none" stroke="#e04a4a" stroke-width="1"/><path d="M1 11.5 L11 0.5" stroke="#e04a4a" stroke-width="1.2"/></svg>Madiyar Abiev</div></div>
<div class="tile" style="top:209px"><div class="big" style="">Бахытгуль&nbsp; Солт...</div><div class="lab" style="top:66px;width:126px;padding-left:3px;">Бахытгуль Солтанова</div></div>
<div class="tile" style="top:299px"><svg class="a" style="left:0;top:0" width="150" height="85" viewBox="0 0 150 85"><defs><filter id="bl2" x="-5%" y="-5%" width="110%" height="110%"><feGaussianBlur stdDeviation="1.1"/></filter></defs><rect width="150" height="85" fill="#dcdcde"/><g filter="url(#bl2)"><rect x="0" y="0" width="150" height="85" fill="#e0e0e2"/><rect x="0" y="0" width="30" height="85" fill="#d2d2d4"/><rect x="36" y="-4" width="68" height="37" fill="#b6a35e"/><rect x="39" y="-4" width="62" height="33" fill="#8fb4de"/><rect x="44" y="-4" width="30" height="30" fill="#7aa0d0"/><rect x="143" y="0" width="8" height="85" fill="#d46e66"/><path d="M50 85 C50 50 54 18 66 9 C78 1 102 1 114 9 C124 18 126 50 124 85Z" fill="#1c191b"/><ellipse cx="88" cy="52" rx="25" ry="36" fill="#d8b29f"/><path d="M62 26 C66 10 80 5 90 5 C104 5 116 12 118 28 C110 18 98 14 88 15 C76 16 68 20 62 26Z" fill="#1c191b"/><path d="M70 36 C74 34 80 34 84 36 M93 36 C97 34 103 34 107 36" stroke="#4a3630" stroke-width="2" fill="none"/><rect x="67" y="40" width="19" height="12" rx="4" fill="none" stroke="#a08a7c" stroke-width="1.2"/><rect x="91" y="40" width="19" height="12" rx="4" fill="none" stroke="#a08a7c" stroke-width="1.2"/><path d="M72 45 H82 M95 45 H105" stroke="#3e2c28" stroke-width="2.4"/><path d="M85 62 C86 66 92 66 93 62" fill="none" stroke="#b27e6c" stroke-width="2.2"/></g></svg><div class="lab" style="top:66px;width:139px;padding-left:3px;background:rgba(40,40,40,0.72)">Assemgul Ayazbayeva A</div></div>
<div class="tile" style="top:389px"><div class="big" style="">Камила Серик</div><div class="lab" style="top:66px;width:104px;padding-left:21px;"><svg class="a" style="left:3px;top:3px" width="12" height="12" viewBox="0 0 12 12"><rect x="4" y="0.5" width="4" height="7" rx="2" fill="#e04a4a"/><path d="M2.5 5.5 C2.5 8.5 9.5 8.5 9.5 5.5 M6 8.5 V11 M3.5 11 H8.5" fill="none" stroke="#e04a4a" stroke-width="1"/><path d="M1 11.5 L11 0.5" stroke="#e04a4a" stroke-width="1.2"/></svg>Камила Серик</div></div>
<div class="tile" style="top:479px"><svg class="a" style="left:37px;top:4px" width="76" height="62" viewBox="0 0 76 62"><defs><filter id="bl1" x="-5%" y="-5%" width="110%" height="110%"><feGaussianBlur stdDeviation="1.2"/></filter><clipPath id="cp1"><rect width="76" height="62"/></clipPath></defs><g clip-path="url(#cp1)"><rect width="76" height="62" fill="#5a0a0e"/><g filter="url(#bl1)"><path d="M0 0 H40 C30 10 28 20 30 30 L0 34Z" fill="#c4121c"/><path d="M0 30 L28 28 C24 40 26 52 30 62 H0Z" fill="#3a0508"/><path d="M20 30 C26 26 32 30 34 40 L30 62 H18Z" fill="#1e0405"/><path d="M24 12 C34 2 56 0 72 8 C78 14 76 24 74 30 L60 40 L40 40 C34 34 28 26 24 22Z" fill="#dcdce8"/><path d="M58 16 C66 18 72 24 74 32 L70 36 C66 30 62 24 56 20Z" fill="#1a1416"/><path d="M30 36 C40 34 54 36 62 40 C64 50 60 58 54 62 H34 C30 54 28 44 30 36Z" fill="#e9dedd"/><path d="M40 40 C46 44 50 50 46 56" fill="none" stroke="#8a5a5a" stroke-width="1.4"/><path d="M62 34 C70 36 76 44 76 62 H56 C62 52 62 44 62 34Z" fill="#d84a6a"/></g></g></svg><div class="lab" style="top:66px;width:133px;padding-left:21px;"><svg class="a" style="left:3px;top:3px" width="12" height="12" viewBox="0 0 12 12"><rect x="4" y="0.5" width="4" height="7" rx="2" fill="#e04a4a"/><path d="M2.5 5.5 C2.5 8.5 9.5 8.5 9.5 5.5 M6 8.5 V11 M3.5 11 H8.5" fill="none" stroke="#e04a4a" stroke-width="1"/><path d="M1 11.5 L11 0.5" stroke="#e04a4a" stroke-width="1.2"/></svg>Арыстан Файзуллин</div></div>
<div class="tile" style="top:569px"><div class="big" style="">Летута Катя</div><div class="lab" style="top:66px;width:90px;padding-left:21px;"><svg class="a" style="left:3px;top:3px" width="12" height="12" viewBox="0 0 12 12"><rect x="4" y="0.5" width="4" height="7" rx="2" fill="#e04a4a"/><path d="M2.5 5.5 C2.5 8.5 9.5 8.5 9.5 5.5 M6 8.5 V11 M3.5 11 H8.5" fill="none" stroke="#e04a4a" stroke-width="1"/><path d="M1 11.5 L11 0.5" stroke="#e04a4a" stroke-width="1.2"/></svg>Летута Катя</div></div>
<div class="tile" style="top:659px"><svg class="a" style="left:38px;top:5px" width="75" height="61" viewBox="0 0 75 61"><defs><filter id="bl3" x="-5%" y="-5%" width="110%" height="110%"><feGaussianBlur stdDeviation="1.3"/></filter></defs><rect width="75" height="61" fill="#c4c4c4"/><g filter="url(#bl3)"><rect width="75" height="61" fill="#c9c9c9"/><path d="M36 28 C44 16 60 6 74 4 C74 18 68 30 58 36 C62 44 58 56 50 61 H40 C40 48 38 38 36 28Z" fill="#9ea596"/><path d="M48 16 C52 12 62 10 70 8" stroke="#7b8375" stroke-width="1" fill="none"/><path d="M14 26 C10 36 12 50 16 61 H40 C42 48 40 34 32 24 C26 20 18 22 14 26Z" fill="#b5a7a3"/><path d="M26 26 C30 36 34 46 36 61" stroke="#6b5e5c" stroke-width="2" fill="none"/><circle cx="28" cy="13" r="9" fill="#2e2a2a"/><circle cx="22" cy="9" r="5" fill="#3a3434"/></g></svg><div class="lab" style="top:66px;width:149px;padding-left:3px;background:rgba(40,40,40,0.78)">Палагута&nbsp; Анна Сергеев...</div></div>
<div class="tile" style="top:749px"><svg class="a" style="left:38px;top:4px" width="75" height="62" viewBox="0 0 75 62"><defs><filter id="bl4" x="-5%" y="-5%" width="110%" height="110%"><feGaussianBlur stdDeviation="1"/></filter></defs><rect width="75" height="62" fill="#8c8b90"/><g filter="url(#bl4)"><rect width="75" height="62" fill="#908f94"/><rect x="0" y="0" width="75" height="9" fill="#3e3d42"/><rect x="0" y="9" width="75" height="4" fill="#6a696e"/><path d="M0 14 C8 18 10 30 6 40 C2 44 0 46 0 46Z" fill="#2f342f"/><path d="M66 12 C74 14 76 26 74 40 C68 36 64 26 66 12Z" fill="#2f342f"/><path d="M8 62 C10 48 20 42 30 40 L46 40 C58 42 66 48 68 62Z" fill="#121214"/><path d="M30 40 H46 V46 H30Z" fill="#18181a"/><path d="M48 44 L58 50 L54 62 L44 56Z" fill="#c8c8ce"/><path d="M28 24 C28 38 32 42 38 42 C44 42 48 38 48 24 C44 20 32 20 28 24Z" fill="#dcc8be"/><path d="M24 24 C22 6 52 2 54 22 L50 28 L46 22 L42 28 L38 22 L32 28 L28 22Z" fill="#0e0e12"/></g></svg><div class="lab" style="top:66px;width:132px;padding-left:21px;"><svg class="a" style="left:3px;top:3px" width="12" height="12" viewBox="0 0 12 12"><rect x="4" y="0.5" width="4" height="7" rx="2" fill="#e04a4a"/><path d="M2.5 5.5 C2.5 8.5 9.5 8.5 9.5 5.5 M6 8.5 V11 M3.5 11 H8.5" fill="none" stroke="#e04a4a" stroke-width="1"/><path d="M1 11.5 L11 0.5" stroke="#e04a4a" stroke-width="1.2"/></svg>Gulnaz Olzhagulova</div></div>
<div class="a" style="left:1000px;top:475px;width:158px;height:93px;border:4px solid;border-image:linear-gradient(#e4ec96,#7ccf3c 50%,#e4ec96) 1;"></div>
<div class="a" style="left:1052px;top:743px;width:54px;height:4px;background:#f1ea8a"></div>
<div class="a" style="left:1045px;top:839px;width:69px;height:32px;background:#141414;border-radius:4px"></div>
<svg class="a" style="left:1072px;top:851px" width="14" height="8" viewBox="0 0 14 8"><path d="M1 1 L7 7 L13 1" fill="none" stroke="#cfcfcf" stroke-width="1.6"/></svg>
<div class="a" style="left:950px;top:464px;width:2px;height:24px;background:#8a8a8a"></div><div class="a" style="left:953px;top:464px;width:2px;height:24px;background:#8a8a8a"></div>
<div class="a" style="left:26px;top:807px;width:175px;height:61px;background:#262626;border-radius:1px"></div>
<svg class="a" style="left:46px;top:867px" width="18" height="9" viewBox="0 0 18 9"><path d="M0 0 H18 L9 9Z" fill="#262626"/></svg>
<div class="t" style="left:40px;top:820px;font-size:12px;line-height:16px;color:#dcdcdc;letter-spacing:0.15px">Нажмите, чтобы<br>подключить звук</div>
<svg class="a" style="left:43px;top:888px" width="25" height="19" viewBox="0 0 25 19"><path d="M3.5 13 V10 C3.5 4 7.5 1.5 12.5 1.5 C17.5 1.5 21.5 4 21.5 10 V13" fill="none" stroke="#c9c9c9" stroke-width="2.2"/><rect x="1" y="10" width="5" height="8" rx="2.5" fill="#c9c9c9"/><rect x="19" y="10" width="5" height="8" rx="2.5" fill="#c9c9c9"/><path d="M12.5 17 V8 M9.5 11 L12.5 8 L15.5 11" fill="none" stroke="#28c04a" stroke-width="2"/></svg>
<svg class="a" style="left:94px;top:895px" width="8" height="5" viewBox="0 0 8 5"><path d="M1 4.5 L4 1.5 L7 4.5" fill="none" stroke="#d0d0d0" stroke-width="1.4"/></svg>
<div class="t" style="left:-4px;width:120px;text-align:center;top:913px;font-size:11.5px;color:#c4c4c4;letter-spacing:-0.05px;text-shadow:0.35px 0 0 #c4c4c4;">Подключить звук</div>
<svg class="a" style="left:146px;top:886px" width="28" height="24" viewBox="0 0 28 24"><rect x="2" y="7" width="16" height="12" rx="2" fill="#c4c4c4"/><path d="M18 11 L25 7.5 V18.5 L18 15Z" fill="#c4c4c4"/><path d="M3 23 L25 1.5" stroke="#e03e3e" stroke-width="1.6"/><path d="M4.5 23 L26.5 1.5" stroke="#1a1a1a" stroke-width="1.2"/></svg>
<div class="t" style="left:100px;width:120px;text-align:center;top:913px;font-size:11.5px;color:#c4c4c4;letter-spacing:-0.05px;text-shadow:0.35px 0 0 #c4c4c4;">Включить видео</div>
<svg class="a" style="left:467px;top:888px" width="26" height="18" viewBox="0 0 26 18"><circle cx="9" cy="5" r="4.3" fill="#c9c9c9"/><path d="M0.5 17.5 C0.5 11 4 9.5 9 9.5 C14 9.5 17.5 11 17.5 17.5Z" fill="#c9c9c9"/><circle cx="18.5" cy="6" r="3.6" fill="#c9c9c9"/><path d="M15 10.5 C22 9.5 25.5 12 25.5 17.5 H19 C19 14 17.5 12 15 10.5Z" fill="#c9c9c9"/></svg>
<div class="t" style="left:495px;top:889px;font-size:11px;color:#d0d0d0">15</div>
<svg class="a" style="left:526px;top:895px" width="8" height="5" viewBox="0 0 8 5"><path d="M1 4.5 L4 1.5 L7 4.5" fill="none" stroke="#d0d0d0" stroke-width="1.4"/></svg>
<div class="t" style="left:430px;width:100px;text-align:center;top:913px;font-size:11.5px;color:#c4c4c4;letter-spacing:-0.05px;text-shadow:0.35px 0 0 #c4c4c4;">Участники</div>
<svg class="a" style="left:567px;top:887px" width="26" height="23" viewBox="0 0 26 23"><path d="M2 4 C2 2.5 3.5 1.5 5 1.5 H19 C20.5 1.5 22 2.5 22 4 V14 C22 15.5 20.5 16.5 19 16.5 H9 L4 21 V16.5 C3 16.5 2 15.5 2 14Z" fill="#c4c4c4"/></svg>
<div class="a" style="left:581px;top:883px;width:15px;height:15px;border-radius:50%;background:#e02f2f;color:#fff;font-size:10px;font-weight:bold;text-align:center;line-height:15px">2</div>
<div class="t" style="left:548px;width:60px;text-align:center;top:913px;font-size:11.5px;color:#c4c4c4;letter-spacing:-0.05px;text-shadow:0.35px 0 0 #c4c4c4;">Чат</div>
<div class="a" style="left:669px;top:888px;width:23px;height:18px;background:#24c24a;border-radius:3px"></div>
<svg class="a" style="left:674px;top:891px" width="13" height="12" viewBox="0 0 13 12"><path d="M6.5 11 V2 M2.5 5.5 L6.5 1.5 L10.5 5.5" fill="none" stroke="#0d2a12" stroke-width="2"/></svg>
<div class="t" style="left:601px;width:160px;text-align:center;top:913px;font-size:11.5px;color:#2ed158;letter-spacing:-0.2px;text-shadow:0.35px 0 0 #2ed158;">Демонстрация экрана</div>
<div class="a" style="left:774px;top:888px;width:19px;height:19px;border-radius:50%;border:2px solid #c4c4c4;background:#1a1a1a"></div>
<div class="a" style="left:777px;top:891px;width:13px;height:13px;border-radius:50%;background:#c4c4c4"></div>
<div class="t" style="left:743px;width:80px;text-align:center;top:913px;font-size:11.5px;color:#c4c4c4;letter-spacing:-0.05px;text-shadow:0.35px 0 0 #c4c4c4;">Запись</div>
<svg class="a" style="left:848px;top:885px" width="24" height="23" viewBox="0 0 24 23"><circle cx="10" cy="13" r="9.5" fill="#c4c4c4"/><circle cx="7" cy="11" r="1.3" fill="#1a1a1a"/><circle cx="13" cy="11" r="1.3" fill="#1a1a1a"/><path d="M6 15 C8 18 12 18 14 15" fill="none" stroke="#1a1a1a" stroke-width="1.4"/><path d="M19 1 V7 M16 4 H22" stroke="#c4c4c4" stroke-width="1.4"/></svg>
<div class="t" style="left:819px;width:80px;text-align:center;top:913px;font-size:11.5px;color:#c4c4c4;letter-spacing:-0.05px;text-shadow:0.35px 0 0 #c4c4c4;">Реакции</div>
<div class="a" style="left:1130px;top:894px;width:59px;height:26px;background:#d12d2d;border-radius:5px"></div>
<div class="t" style="left:1129px;width:60px;text-align:center;top:900px;font-size:12px;font-weight:bold;color:#f4f4f4">Выйти</div>
<div id="taskbar" class="a"><svg class="a" style="left:9px;top:6px" width="16" height="16" viewBox="0 0 16 16" fill="#f2f2f2"><path d="M0 2.2 L6.5 1.3 V7.5 H0Z M7.5 1.1 L16 0 V7.5 H7.5Z M0 8.5 H6.5 V14.7 L0 13.8Z M7.5 8.5 H16 V16 L7.5 14.9Z"/></svg><svg class="a" style="left:45px;top:6px" width="17" height="16" viewBox="0 0 17 16"><rect x="0.5" y="0.5" width="16" height="11" fill="#4fa6e8"/><rect x="1.5" y="1.5" width="14" height="9" fill="#69bff5"/><rect x="7.5" y="11.5" width="2" height="2" fill="#cfd8e0"/><rect x="3" y="13.5" width="11" height="2" fill="#cfd8e0"/></svg><svg class="a" style="left:80px;top:6px" width="17" height="16" viewBox="0 0 17 16"><path d="M0 2 H6 L8 4 H16 V15 H0Z" fill="#e9b93c"/><rect x="0" y="6" width="16" height="9" fill="#f6d365"/><rect x="5" y="9" width="6" height="5" fill="#3f7fb5"/><rect x="6.5" y="8" width="3" height="2" fill="#2b5a86"/></svg><div class="a" style="left:106px;top:0;width:34px;height:28px;background:#3b4955"></div><svg class="a" style="left:115px;top:6px" width="16" height="16" viewBox="0 0 16 16"><circle cx="8" cy="8" r="8" fill="#2d8cff"/><rect x="3.5" y="5.3" width="6" height="5.4" rx="1" fill="#fff"/><path d="M10 7.3 L12.5 6 V10 L10 8.7Z" fill="#fff"/></svg><svg class="a" style="left:150px;top:6px" width="16" height="16" viewBox="0 0 16 16"><circle cx="8" cy="8" r="8" fill="#db4437"/><path d="M8 8 L15.2 4.5 A8 8 0 0 1 9.5 15.9Z" fill="#f4c20d"/><path d="M8 8 L9.5 15.9 A8 8 0 0 1 0.8 4.5Z" fill="#0f9d58"/><circle cx="8" cy="8" r="3.8" fill="#fff"/><circle cx="8" cy="8" r="3" fill="#4285f4"/></svg><svg class="a" style="left:184px;top:6px" width="16" height="16" viewBox="0 0 16 16"><rect x="5" y="1" width="11" height="14" fill="#f3f3f3"/><g fill="#3b63a8"><rect x="9" y="3.5" width="5" height="1"/><rect x="9" y="6" width="5" height="1"/><rect x="9" y="8.5" width="5" height="1"/><rect x="9" y="11" width="5" height="1"/></g><rect x="0" y="2.5" width="9.5" height="11" fill="#2b579a"/><path d="M1.5 5 L3 11 L4.8 6.5 L6.5 11 L8 5" fill="none" stroke="#fff" stroke-width="1"/></svg><div class="a" style="left:75px;top:26px;width:26px;height:2px;background:#7aa3cc"></div><div class="a" style="left:106px;top:26px;width:34px;height:2px;background:#7aa3cc"></div><div class="a" style="left:144px;top:26px;width:27px;height:2px;background:#7aa3cc"></div><div class="a" style="left:179px;top:26px;width:26px;height:2px;background:#7aa3cc"></div><svg class="a" style="left:996px;top:10px" width="12" height="7" viewBox="0 0 12 7"><path d="M1 6 L6 1 L11 6" fill="none" stroke="#e6e6e6" stroke-width="1.2"/></svg><svg class="a" style="left:1018px;top:6px" width="13" height="16" viewBox="0 0 13 16"><path d="M2 2 C4 0.5 9 0.5 11 2 M2 14 C4 15.5 9 15.5 11 14" fill="none" stroke="#ddd" stroke-width="1"/><rect x="1.5" y="4.5" width="7" height="7" rx="1" fill="none" stroke="#ddd"/><path d="M9 6.5 L12 5 V11 L9 9.5" fill="none" stroke="#ddd"/></svg><svg class="a" style="left:1039px;top:6px" width="16" height="16" viewBox="0 0 16 16"><rect x="0.5" y="0.5" width="5" height="4" fill="none" stroke="#ddd"/><rect x="3.5" y="3.5" width="12" height="8" fill="#1e2b37" stroke="#ddd"/><path d="M9.5 11.5 V14.5 M6 15 H13" stroke="#ddd"/></svg><svg class="a" style="left:1061px;top:5px" width="17" height="17" viewBox="0 0 17 17"><path d="M1 6 H4 L8 2 V14 L4 10 H1Z" fill="none" stroke="#ddd" stroke-width="1"/><circle cx="12" cy="12" r="4" fill="#e23b3b"/><path d="M10.3 10.3 L13.7 13.7 M13.7 10.3 L10.3 13.7" stroke="#fff" stroke-width="1"/></svg><div class="t" style="left:1086px;top:8px;font-size:11px;color:#e8e8e8;letter-spacing:-0.3px">ҚАЗ</div><div class="t" style="left:1119px;top:8px;font-size:11px;color:#e8e8e8;letter-spacing:-0.2px">09:06</div><svg class="a" style="left:1161px;top:6px" width="16" height="16" viewBox="0 0 16 16"><path d="M0.5 0.5 H15.5 V11.5 H9 L5.5 15 V11.5 H0.5Z" fill="none" stroke="#e6e6e6" stroke-width="1"/></svg></div>
</body></html>
